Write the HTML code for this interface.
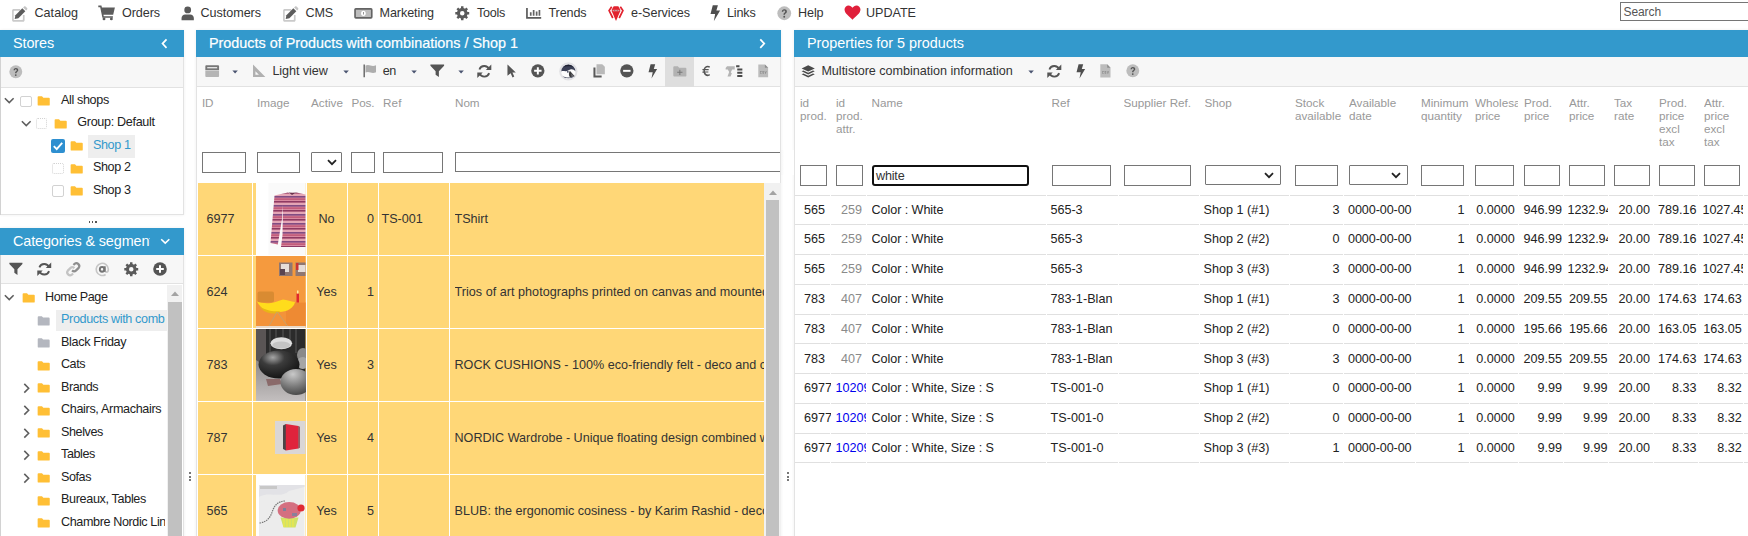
<!DOCTYPE html>
<html><head><meta charset="utf-8"><title>Store Commander</title>
<style>
html,body{margin:0;padding:0;}
body{width:1748px;height:536px;overflow:hidden;background:#fff;position:relative;font-family:"Liberation Sans",sans-serif;}
.t{position:absolute;white-space:nowrap;line-height:1;}
.r{position:absolute;}
.i{position:absolute;overflow:visible;}
.inp{position:absolute;box-sizing:border-box;border:1px solid #767676;background:#fff;border-radius:0;}
.sel{position:absolute;box-sizing:border-box;border:1px solid #767676;background:#fff;border-radius:1px;}
</style></head><body>

<svg class="i" style="left:11px;top:5.5px" width="17" height="16" viewBox="0 0 17 16" ><path d="M2.600 3.100h6.600v1.700H3.200c-.3 0-.5.200-.5.500v8.200c0 .3.200.5.500.5h8.200c.3 0 .5-.2.500-.5V9h1.700v5.300c0 .8-.7 1.500-1.500 1.500H2.600c-.8 0-1.500-.7-1.500-1.500V4.600c0-.8.700-1.500 1.500-1.500z" fill="#cacaca"/><path d="M11.300 2.300l3 3-6.900 6.900-3.700.8.700-3.700z" fill="#5c5c5c"/><path d="M12.100 1.500l1-1c.4-.4 1-.4 1.400 0l1.600 1.600c.4.400.4 1 0 1.400l-1 1z" fill="#c4c4c4"/></svg>
<div class="t " style="left:34.5px;top:7.00px;font-size:12.6px;color:#333;letter-spacing:0.011px;">Catalog</div>
<svg class="i" style="left:98.2px;top:5.2px" width="17.2" height="15.6" viewBox="0 0 18 16" ><path d="M0.300 0.400h3.300l0.500 2.100h13.600l-1.800 7.500H5.700l0.300 1.500h9.600v1.600H4.600L2.300 2.100H0.300z" fill="#5c5c5c"/><circle cx="6.300" cy="14.400" r="1.500" fill="#5c5c5c"/><circle cx="14" cy="14.400" r="1.500" fill="#5c5c5c"/></svg>
<div class="t " style="left:122px;top:7.00px;font-size:12.6px;color:#333;letter-spacing:-0.083px;">Orders</div>
<svg class="i" style="left:180.8px;top:6px" width="13.4" height="14.7" viewBox="0 0 14 16" ><circle cx="7" cy="4.3" r="3.7" fill="#5a5a5a"/><path d="M0.3 15.5v-2.3c0-2.3 1.8-3.9 4-3.9h5.4c2.2 0 4 1.6 4 3.9v2.3z" fill="#5a5a5a"/></svg>
<div class="t " style="left:200.5px;top:7.00px;font-size:12.6px;color:#333;letter-spacing:-0.043px;">Customers</div>
<svg class="i" style="left:282px;top:5.5px" width="17" height="16" viewBox="0 0 17 16" ><path d="M2.600 3.100h6.600v1.700H3.200c-.3 0-.5.200-.5.500v8.200c0 .3.200.5.500.5h8.200c.3 0 .5-.2.500-.5V9h1.700v5.300c0 .8-.7 1.500-1.500 1.500H2.600c-.8 0-1.500-.7-1.500-1.500V4.600c0-.8.700-1.500 1.500-1.500z" fill="#cacaca"/><path d="M11.300 2.300l3 3-6.900 6.900-3.700.8.700-3.700z" fill="#5c5c5c"/><path d="M12.100 1.500l1-1c.4-.4 1-.4 1.400 0l1.600 1.600c.4.400.4 1 0 1.400l-1 1z" fill="#c4c4c4"/></svg>
<div class="t " style="left:305.5px;top:7.00px;font-size:12.6px;color:#333;letter-spacing:-0.167px;">CMS</div>
<svg class="i" style="left:353.8px;top:7.8px" width="18.8" height="10.7" viewBox="0 0 19 11" ><rect x="0.900" y="0.900" width="17.200" height="9.200" rx="0.800" fill="#bdbdbd" stroke="#636363" stroke-width="1.700"/><ellipse cx="9.500" cy="5.500" rx="2.400" ry="2.700" fill="#fff"/><path d="M9.100 4.200h0.900v2.600h-0.900z" fill="#888"/></svg>
<div class="t " style="left:379.5px;top:7.00px;font-size:12.6px;color:#333;letter-spacing:-0.089px;">Marketing</div>
<svg class="i" style="left:455px;top:6px" width="14.5" height="14.5" viewBox="0 0 16 16" ><path fill-rule="evenodd" d="M15.68 6.66 L15.68 9.34 L13.74 9.38 L13.03 11.08 L14.38 12.49 L12.49 14.38 L11.08 13.03 L9.38 13.74 L9.34 15.68 L6.66 15.68 L6.62 13.74 L4.92 13.03 L3.51 14.38 L1.62 12.49 L2.97 11.08 L2.26 9.38 L0.32 9.34 L0.32 6.66 L2.26 6.62 L2.97 4.92 L1.62 3.51 L3.51 1.62 L4.92 2.97 L6.62 2.26 L6.66 0.32 L9.34 0.32 L9.38 2.26 L11.08 2.97 L12.49 1.62 L14.38 3.51 L13.03 4.92 L13.74 6.62Z M5.50 8.00 a2.50 2.50 0 1 0 5.00 0 a2.50 2.50 0 1 0 -5.00 0Z" fill="#5a5a5a"/></svg>
<div class="t " style="left:477px;top:7.00px;font-size:12.6px;color:#333;letter-spacing:-0.281px;">Tools</div>
<svg class="i" style="left:526.3px;top:7.8px" width="15.2" height="10.7" viewBox="0 0 15.200 10.700" ><path d="M0.100 0h1.700v9h13.400v1.700H0.100z" fill="#5a5a5a"/><path d="M3.900 4.300h1.700v3.400H3.900zM6.800 1.900h1.700v5.800H6.800zM9.800 3.600h1.700v4.100H9.800zM12.600 1.900h1.700v5.800h-1.700z" fill="#636363"/></svg>
<div class="t " style="left:548.5px;top:7.00px;font-size:12.6px;color:#333;letter-spacing:-0.122px;">Trends</div>
<svg class="i" style="left:607.5px;top:5.6px" width="16" height="15" viewBox="0 0 16 15" ><path d="M5.700 0.200h4.600l1.900 3.400v1.600L8 14.900 3.800 5.200V3.600z" fill="#e2222e"/><path d="M3.700 0.700L1.100 4.600l3.700 7.400" fill="none" stroke="#e2222e" stroke-width="1.700"/><path d="M12.300 0.700l2.600 3.900-3.700 7.400" fill="none" stroke="#e2222e" stroke-width="1.700"/><path d="M4.600 3.800h6.800v1.500H4.600z" fill="#dd9a9e"/><path d="M6.200 4.200h1v.8h-1zM8.800 4.200h1v.8h-1z" fill="#8a5a60"/></svg>
<div class="t " style="left:631px;top:7.00px;font-size:12.6px;color:#333;letter-spacing:-0.050px;">e-Services</div>
<svg class="i" style="left:709.5px;top:5px" width="10.5" height="16.5" viewBox="0 0 10 16" ><path d="M2.6 0.3h5L6.1 5.4h3.6L3.6 15.8l1.3-7H0.4z" fill="#4e4e4e"/></svg>
<div class="t " style="left:727px;top:7.00px;font-size:12.6px;color:#333;letter-spacing:-0.181px;">Links</div>
<svg class="i" style="left:776.5px;top:6px" width="14.5" height="14.5" viewBox="0 0 16 16" ><circle cx="8" cy="8" r="7.6" fill="#bdbdbd"/><path d="M5.3 6.3c0-1.7 1.2-2.8 2.8-2.8 1.6 0 2.8 1 2.8 2.5 0 1.2-.7 1.8-1.4 2.3-.5.4-.7.7-.7 1.3H7.1c0-1 .4-1.6 1.1-2.1.5-.4.9-.7.9-1.4 0-.6-.4-1-1.1-1-.7 0-1.1.5-1.1 1.200z" fill="#555"/><circle cx="7.95" cy="11.9" r="1.05" fill="#555"/></svg>
<div class="t " style="left:798px;top:7.00px;font-size:12.6px;color:#333;letter-spacing:-0.102px;">Help</div>
<svg class="i" style="left:844px;top:5px" width="17" height="15" viewBox="0 0 18 16" ><path d="M9 15.6C5 12 0.5 8.800 0.5 4.900 0.500 2.300 2.500 0.500 4.800 0.500 6.500 0.500 8.100 1.500 9 3 9.900 1.500 11.500 0.500 13.200 0.500 15.500 0.500 17.500 2.300 17.500 4.900 17.500 8.800 13 12 9 15.600z" fill="#e0203b"/></svg>
<div class="t " style="left:866px;top:7.00px;font-size:12.6px;color:#333;letter-spacing:-0.026px;">UPDATE</div>
<div class="inp" style="left:1620px;top:2px;width:140px;height:19px;"></div>
<div class="t " style="left:1623.5px;top:6.00px;font-size:12px;color:#555;letter-spacing:-0.089px;">Search</div>
<div class="r" style="left:0px;top:30px;width:184px;height:185px;background:#fff;box-sizing:border-box;border:1px solid #e3e3e3;box-shadow:0 0 3px rgba(0,0,0,.07);"></div>
<div class="r" style="left:0px;top:228px;width:184px;height:320px;background:#fff;box-sizing:border-box;border:1px solid #e3e3e3;box-shadow:0 0 3px rgba(0,0,0,.07);"></div>
<div class="r" style="left:196px;top:30px;width:585px;height:520px;background:#fff;box-sizing:border-box;border:1px solid #e3e3e3;box-shadow:0 0 3px rgba(0,0,0,.07);"></div>
<div class="r" style="left:794px;top:30px;width:970px;height:520px;background:#fff;box-sizing:border-box;border:1px solid #e3e3e3;box-shadow:0 0 3px rgba(0,0,0,.07);"></div>
<div class="r" style="left:0px;top:57px;width:1px;height:158px;background:#d2d2d2;"></div>
<div class="r" style="left:0px;top:255px;width:1px;height:281px;background:#d2d2d2;"></div>
<div class="r" style="left:0px;top:30px;width:184px;height:27px;background:#3399cc;"></div>
<div class="t " style="left:13px;top:36.00px;font-size:14.4px;color:#fff;letter-spacing:-0.099px;">Stores</div>
<svg class="i" style="left:161px;top:37.5px" width="6.8" height="11.2" viewBox="0 0 8 12" ><path d="M6.5 1L1.8 6l4.700 5" fill="none" stroke="#fff" stroke-width="2"/></svg>
<div class="r" style="left:196px;top:30px;width:585px;height:27px;background:#3399cc;"></div>
<div class="t " style="left:209px;top:36.00px;font-size:14.4px;color:#fff;-webkit-text-stroke:0.2px #fff;letter-spacing:-0.012px;">Products of Products with combinations / Shop 1</div>
<svg class="i" style="left:758.7px;top:37.5px" width="6.8" height="11.2" viewBox="0 0 8 12" ><path d="M1.500 1L6.200 6l-4.700 5" fill="none" stroke="#fff" stroke-width="2"/></svg>
<div class="r" style="left:794px;top:30px;width:954px;height:27px;background:#3399cc;"></div>
<div class="t " style="left:807px;top:36.00px;font-size:14.4px;color:#fff;letter-spacing:-0.023px;">Properties for 5 products</div>
<div class="r" style="left:1px;top:57px;width:182px;height:31px;background:#f7f7f7;border-bottom:1px solid #e2e2e2;box-sizing:border-box;"></div>
<div class="r" style="left:197px;top:57px;width:583px;height:30px;background:#f7f7f7;border-bottom:1px solid #e2e2e2;box-sizing:border-box;"></div>
<div class="r" style="left:795px;top:57px;width:953px;height:30px;background:#f7f7f7;border-bottom:1px solid #e2e2e2;box-sizing:border-box;"></div>
<svg class="i" style="left:8.7px;top:64.8px" width="13.6" height="13.6" viewBox="0 0 16 16" ><circle cx="8" cy="8" r="7.6" fill="#bdbdbd"/><path d="M5.3 6.3c0-1.7 1.2-2.8 2.8-2.8 1.6 0 2.8 1 2.8 2.5 0 1.2-.7 1.8-1.4 2.3-.5.4-.7.7-.7 1.3H7.1c0-1 .4-1.6 1.1-2.1.5-.4.9-.7.9-1.4 0-.6-.4-1-1.1-1-.7 0-1.1.5-1.1 1.200z" fill="#555"/><circle cx="7.95" cy="11.9" r="1.05" fill="#555"/></svg>
<svg class="i" style="left:204.8px;top:64.5px" width="14.4" height="12.4" viewBox="0 0 15 13" ><path d="M0.3 1.500c0-.7.5-1.200 1.200-1.200h12c.7 0 1.200.5 1.200 1.200v4H0.3z" fill="#777"/><path d="M2.300 2.200h10.400v1.300H2.300z" fill="#eee"/><path d="M0.3 6h14.400v5.500c0 .7-.5 1.200-1.200 1.200h-12c-.7 0-1.200-.5-1.200-1.200z" fill="#b5b5b5"/></svg>
<svg class="i" style="left:232px;top:70.3px" width="6.2" height="3.8" viewBox="0 0 8 5" ><path d="M0.4 0.500h7.200L4 4.600z" fill="#4a5470"/></svg>
<svg class="i" style="left:251.5px;top:64px" width="14" height="13.5" viewBox="0 0 14 14" ><path fill-rule="evenodd" d="M0.800 0.500L13.600 13.500H0.800zM3.300 7.600v3.600h3.600z" fill="#b0b0b0"/></svg>
<div class="t " style="left:272.4px;top:65.00px;font-size:12.6px;color:#333;letter-spacing:-0.062px;">Light view</div>
<svg class="i" style="left:343px;top:70.3px" width="6.2" height="3.8" viewBox="0 0 8 5" ><path d="M0.4 0.500h7.200L4 4.600z" fill="#4a5470"/></svg>
<svg class="i" style="left:362.8px;top:63.8px" width="13.5" height="13.7" viewBox="0 0 14 14" ><path d="M0.500 0.300h1.500v13.400H0.500z" fill="#666"/><path d="M2.600 1.500c2-1 3.500-.6 5.200 0 1.700.6 3.500.8 5.700-.3v7.300c-2.200 1.100-4 .9-5.700.3-1.700-.6-3.200-1-5.200 0z" fill="#adadad"/></svg>
<div class="t " style="left:382.7px;top:65.00px;font-size:12.6px;color:#333;letter-spacing:-0.558px;">en</div>
<svg class="i" style="left:411px;top:70.3px" width="6.2" height="3.8" viewBox="0 0 8 5" ><path d="M0.4 0.500h7.200L4 4.600z" fill="#4a5470"/></svg>
<svg class="i" style="left:430.3px;top:64px" width="14.5" height="13.5" viewBox="0 0 15 14" ><path d="M0.400 0.400h14.200v1.300L9.200 7.400v6.200L5.800 11.200V7.400L0.400 1.700z" fill="#555"/></svg>
<svg class="i" style="left:457.7px;top:70.3px" width="6.2" height="3.8" viewBox="0 0 8 5" ><path d="M0.4 0.500h7.200L4 4.600z" fill="#4a5470"/></svg>
<svg class="i" style="left:477.4px;top:63.8px" width="14.6" height="14.6" viewBox="0 0 15 15" ><path d="M12.400 5.300A5.300 5.300 0 0 0 2.500 5.600" fill="none" stroke="#555" stroke-width="1.900"/><path d="M2.600 9.700A5.300 5.300 0 0 0 12.500 9.400" fill="none" stroke="#555" stroke-width="1.900"/><path d="M14.700 0.600v5.600H9.100zM0.300 14.400V8.800h5.600z" fill="#555"/></svg>
<svg class="i" style="left:506.6px;top:63.9px" width="9.2" height="13.8" viewBox="0 0 10 15" ><path d="M0.500 0.400L9.600 9.300H5.900l2 4.400-1.900.9-2-4.500L0.500 12.800z" fill="#555"/></svg>
<svg class="i" style="left:530.7px;top:63.9px" width="13.7" height="13.7" viewBox="0 0 14 14" ><circle cx="7" cy="7" r="6.800" fill="#555"/><path d="M6 3.200h2V6h2.800v2H8v2.800H6V8H3.200V6H6z" fill="#fff"/></svg>
<svg class="i" style="left:559px;top:62px" width="18.7" height="18.7" viewBox="0 0 19 19" ><circle cx="9.500" cy="9.500" r="9.300" fill="#e2e2e5"/><circle cx="9.500" cy="9.700" r="7.300" fill="#fdfdfd"/><path d="M2.300 9.700A7.200 7.200 0 0 1 16.700 9.700C15.500 7.500 13.500 7 11.500 7.500 9.500 8 9 9.200 7 9.300 5 9.400 3.500 8.800 2.300 9.700z" fill="#3c4056"/><path d="M4 5.500A7 7 0 0 1 15 5.500C12 4 7 4 4 5.500z" fill="#1e2030"/><path d="M11 8.900l5 5.600-4.900 1.100c-1.400-2-1.400-4.600-.1-6.700z" fill="#3a3a3d"/><path d="M12.400 11.500l2.600 2.800-2.400.5z" fill="#6c6c72"/><circle cx="9" cy="10" r="0.900" fill="#3c4056"/><path d="M3.700 14.300C6.500 16.300 12.500 16.300 15.300 14.300 13.500 17.300 5.500 17.300 3.700 14.300z" fill="#3c4056"/></svg>
<svg class="i" style="left:593px;top:63.9px" width="12.3" height="13.8" viewBox="0 0 13 15" ><path d="M3.600 0.300h6.300l2.800 2.800v8.100H3.600z" fill="#b9b9b9"/><path d="M0.300 3.800h2.200v8.700h6.700v2.200H0.300z" fill="#5a5a5a"/></svg>
<svg class="i" style="left:620.4px;top:63.9px" width="13.7" height="13.7" viewBox="0 0 14 14" ><circle cx="7" cy="7" r="6.800" fill="#555"/><path d="M3.200 6h7.600v2H3.200z" fill="#fff"/></svg>
<svg class="i" style="left:648.2px;top:63.5px" width="9.6" height="14.8" viewBox="0 0 10 16" ><path d="M2.6 0.3h5L6.1 5.4h3.6L3.6 15.8l1.3-7H0.4z" fill="#4e4e4e"/></svg>
<div class="r" style="left:665px;top:57px;width:29px;height:29.5px;background:#dedede;"></div>
<svg class="i" style="left:673.3px;top:65.5px" width="13.7" height="10.8" viewBox="0 0 14 11" ><path d="M0.3 1.300c0-.6.4-1 1-1h3.600l1.400 1.500h6.400c.6 0 1 .4 1 1v7c0 .6-.4 1-1 1H1.300c-.6 0-1-.4-1-1z" fill="#b2b2b2"/><path d="M6.500 3.700h1v2.200h2.200v1H7.500v2.200h-1V6.900H4.300v-1h2.200z" fill="#777"/></svg>
<svg class="i" style="left:702px;top:64.5px" width="8.7" height="12" viewBox="0 0 10 13" ><path d="M9.300 1.300C8.500.7 7.600.4 6.600.4 4.300.4 2.500 2 1.900 4.300H0.500v1.300h1.200v1.500H0.500v1.300h1.400c.6 2.400 2.400 4 4.700 4 1 0 1.900-.3 2.700-.9L8.500 10c-.5.400-1.200.6-1.900.6-1.300 0-2.400-.9-2.900-2.300h3.600V7.100H3.400V5.600h4.300V4.300H3.700c.5-1.400 1.600-2.200 2.900-2.200.7 0 1.400.2 1.900.6z" fill="#555"/></svg>
<svg class="i" style="left:725px;top:64.5px" width="18" height="13" viewBox="0 0 19 14" ><path d="M0.500 3.300l1.500-2h8.300v3.500H7.500L6 8.200 7.200 9 5.800 12.500H2.500l1.800-5-1.500-2.700H0.500z" fill="#b4b4b4"/><path d="M11.800 0.400h3.600v2h-3.600zM13 3.800h5.500v2H13zM13 7.300h5.500v2H13zM13 10.800h5.500v2.200H13z" fill="#4a4a4a"/></svg>
<svg class="i" style="left:758px;top:63.9px" width="10.4" height="13.8" viewBox="0 0 11 14" ><path d="M0.300 0.300h7l3.400 3.400v10H0.300z" fill="#bcbcbc"/><path d="M7.300 0.300l3.400 3.400H7.300z" fill="#8e8e8e"/><path d="M2.300 7.200h1.600v.6H2.900v1.600h1v.6H2.300zM4.700 7.200h1.600v.6H5.300v.5h1v1.700H4.700v-.6h1v-.5h-1zM6.900 7.200h.6l.5 1.800.5-1.800h.6L8.300 10h-.6z" fill="#8a8a8a"/></svg>
<svg class="i" style="left:801.2px;top:64.5px" width="14.4" height="13.2" viewBox="0 0 15 14" ><path d="M7.500 0.300l7 3.300-7 3.300-7-3.300z" fill="#4a4a4a"/><path d="M2.400 5.800L7.500 8.200l5.100-2.400 1.900.9-7 3.300-7-3.300z" fill="#4a4a4a"/><path d="M2.400 9l5.100 2.400L12.600 9l1.900.9-7 3.300-7-3.300z" fill="#4a4a4a"/></svg>
<div class="t " style="left:821.4px;top:65.00px;font-size:12.6px;color:#333;letter-spacing:-0.015px;">Multistore combination information</div>
<svg class="i" style="left:1027.9px;top:70.3px" width="6.2" height="3.8" viewBox="0 0 8 5" ><path d="M0.4 0.500h7.200L4 4.600z" fill="#4a5470"/></svg>
<svg class="i" style="left:1046.9px;top:63.8px" width="14.6" height="14.6" viewBox="0 0 15 15" ><path d="M12.400 5.300A5.300 5.300 0 0 0 2.500 5.600" fill="none" stroke="#555" stroke-width="1.900"/><path d="M2.600 9.700A5.300 5.300 0 0 0 12.500 9.400" fill="none" stroke="#555" stroke-width="1.900"/><path d="M14.700 0.600v5.600H9.100zM0.300 14.400V8.800h5.600z" fill="#555"/></svg>
<svg class="i" style="left:1075.9px;top:63.5px" width="9.6" height="14.8" viewBox="0 0 10 16" ><path d="M2.6 0.3h5L6.1 5.4h3.6L3.6 15.8l1.3-7H0.4z" fill="#4e4e4e"/></svg>
<svg class="i" style="left:1099.8px;top:63.9px" width="10.8" height="13.8" viewBox="0 0 11 14" ><path d="M0.300 0.300h7l3.400 3.400v10H0.300z" fill="#bcbcbc"/><path d="M7.300 0.300l3.400 3.400H7.300z" fill="#8e8e8e"/><path d="M2.300 7.200h1.600v.6H2.900v1.600h1v.6H2.300zM4.700 7.200h1.600v.6H5.300v.5h1v1.700H4.700v-.6h1v-.5h-1zM6.900 7.200h.6l.5 1.800.5-1.800h.6L8.300 10h-.6z" fill="#8a8a8a"/></svg>
<svg class="i" style="left:1126px;top:64.3px" width="13.6" height="13.6" viewBox="0 0 16 16" ><circle cx="8" cy="8" r="7.6" fill="#bdbdbd"/><path d="M5.3 6.3c0-1.7 1.2-2.8 2.8-2.8 1.6 0 2.8 1 2.8 2.5 0 1.2-.7 1.8-1.4 2.3-.5.4-.7.7-.7 1.3H7.1c0-1 .4-1.6 1.1-2.1.5-.4.9-.7.9-1.4 0-.6-.4-1-1.1-1-.7 0-1.1.5-1.1 1.200z" fill="#555"/><circle cx="7.95" cy="11.9" r="1.05" fill="#555"/></svg>
<svg class="i" style="left:3.7px;top:97.4px" width="10.5" height="7.3" viewBox="0 0 12 8" ><path d="M1 1.300L6 6.300l5-5" fill="none" stroke="#5e5e5e" stroke-width="1.800"/></svg>
<div class="r" style="left:20.2px;top:95.8px;width:11.5px;height:11.5px;box-sizing:border-box;border:1px solid #d2d2d2;border-radius:2px;background:#fff"></div>
<svg class="i" style="left:36.8px;top:96px" width="13.4" height="9.8" viewBox="0 0 14 11" ><path d="M0.200 1.200c0-.6.400-1 1-1h3.900l1.500 1.700h6.200c.6 0 1 .4 1 1v6.900c0 .6-.4 1-1 1H1.200c-.6 0-1-.4-1-1z" fill="#ffbf35"/></svg>
<div class="t " style="left:60.9px;top:94.00px;font-size:12.6px;color:#222;letter-spacing:-0.345px;">All shops</div>
<svg class="i" style="left:20.8px;top:119.9px" width="10.5" height="7.3" viewBox="0 0 12 8" ><path d="M1 1.300L6 6.300l5-5" fill="none" stroke="#5e5e5e" stroke-width="1.800"/></svg>
<div class="r" style="left:35.8px;top:117.5px;width:11.5px;height:11.5px;box-sizing:border-box;border:1px dotted #d2d2d2;border-radius:2px;background:#fff"></div>
<svg class="i" style="left:53.8px;top:118.5px" width="13.4" height="9.8" viewBox="0 0 14 11" ><path d="M0.200 1.200c0-.6.400-1 1-1h3.900l1.500 1.700h6.200c.6 0 1 .4 1 1v6.900c0 .6-.4 1-1 1H1.200c-.6 0-1-.4-1-1z" fill="#ffbf35"/></svg>
<div class="t " style="left:77.3px;top:116.00px;font-size:12.6px;color:#222;letter-spacing:-0.322px;">Group: Default</div>
<div class="r" style="left:88px;top:134.5px;width:47px;height:23px;background:#eeeeee;"></div>
<svg class="i" style="left:51px;top:139px" width="14" height="14" viewBox="0 0 14 14"><rect x="0" y="0" width="14" height="14" rx="2" fill="#2e8fd0"/><path d="M2.800 7.200l2.900 2.900 5.500-6.200" fill="none" stroke="#fff" stroke-width="1.900"/></svg>
<svg class="i" style="left:70px;top:141px" width="13.4" height="9.8" viewBox="0 0 14 11" ><path d="M0.200 1.200c0-.6.400-1 1-1h3.900l1.500 1.700h6.200c.6 0 1 .4 1 1v6.900c0 .6-.4 1-1 1H1.200c-.6 0-1-.4-1-1z" fill="#ffbf35"/></svg>
<div class="t " style="left:93px;top:139.00px;font-size:12.6px;color:#3399cc;letter-spacing:-0.404px;">Shop 1</div>
<div class="r" style="left:52px;top:162.8px;width:11.5px;height:11.5px;box-sizing:border-box;border:1px dotted #d2d2d2;border-radius:2px;background:#fff"></div>
<svg class="i" style="left:70px;top:163.5px" width="13.4" height="9.8" viewBox="0 0 14 11" ><path d="M0.200 1.200c0-.6.400-1 1-1h3.900l1.500 1.700h6.200c.6 0 1 .4 1 1v6.900c0 .6-.4 1-1 1H1.200c-.6 0-1-.4-1-1z" fill="#ffbf35"/></svg>
<div class="t " style="left:93px;top:161.00px;font-size:12.6px;color:#222;letter-spacing:-0.404px;">Shop 2</div>
<div class="r" style="left:52px;top:185.3px;width:11.5px;height:11.5px;box-sizing:border-box;border:1px solid #d2d2d2;border-radius:2px;background:#fff"></div>
<svg class="i" style="left:70px;top:186px" width="13.4" height="9.8" viewBox="0 0 14 11" ><path d="M0.200 1.200c0-.6.400-1 1-1h3.900l1.500 1.700h6.200c.6 0 1 .4 1 1v6.900c0 .6-.4 1-1 1H1.200c-.6 0-1-.4-1-1z" fill="#ffbf35"/></svg>
<div class="t " style="left:93px;top:184.00px;font-size:12.6px;color:#222;letter-spacing:-0.404px;">Shop 3</div>
<div class="r" style="left:88.5px;top:221.3px;width:1.7px;height:1.7px;background:#555;"></div>
<div class="r" style="left:91.7px;top:221.3px;width:1.7px;height:1.7px;background:#555;"></div>
<div class="r" style="left:94.9px;top:221.3px;width:1.7px;height:1.7px;background:#555;"></div>
<div class="r" style="left:0px;top:228px;width:184px;height:27px;background:#3399cc;"></div>
<div class="t " style="left:13px;top:234.00px;font-size:14.4px;color:#fff;width:136.5px;overflow:hidden;padding-bottom:4px;letter-spacing:-0.110px;">Categories &amp; segments</div>
<svg class="i" style="left:160px;top:237.5px" width="10.5" height="6.5" viewBox="0 0 12 8" ><path d="M1 1.500L6 6.200l5-4.700" fill="none" stroke="#fff" stroke-width="2"/></svg>
<div class="r" style="left:1px;top:255px;width:182px;height:29px;background:#f7f7f7;border-bottom:1px solid #e2e2e2;box-sizing:border-box;"></div>
<svg class="i" style="left:8.8px;top:262px" width="13.8" height="13.7" viewBox="0 0 15 14" ><path d="M0.400 0.400h14.200v1.300L9.200 7.400v6.200L5.800 11.200V7.400L0.400 1.700z" fill="#555"/></svg>
<svg class="i" style="left:37px;top:262px" width="14.5" height="14.5" viewBox="0 0 15 15" ><path d="M12.400 5.300A5.300 5.300 0 0 0 2.500 5.600" fill="none" stroke="#555" stroke-width="1.900"/><path d="M2.600 9.700A5.300 5.300 0 0 0 12.500 9.400" fill="none" stroke="#555" stroke-width="1.900"/><path d="M14.700 0.600v5.600H9.100zM0.300 14.400V8.800h5.600z" fill="#555"/></svg>
<svg class="i" style="left:66px;top:262px" width="14.5" height="14.5" viewBox="0 0 15 15" ><path d="M8.700 6.300a3 3 0 0 0-4.200 0L1.900 8.900a3 3 0 0 0 4.200 4.200l1.200-1.200" fill="none" stroke="#c4c4c4" stroke-width="2.300"/><path d="M6.300 8.700a3 3 0 0 0 4.200 0l2.600-2.600a3 3 0 0 0-4.200-4.200L7.700 3.100" fill="none" stroke="#8e8e8e" stroke-width="2.300"/></svg>
<svg class="i" style="left:95px;top:262px" width="14.5" height="14.5" viewBox="0 0 15 15" ><path d="M10.300 4.600v4.200c0 1.100 .7 1.700 1.500 1.700 1.200 0 2-1.200 2-3A6.300 6.300 0 1 0 11 12.900" fill="none" stroke="#c6c6c6" stroke-width="1.700"/><ellipse cx="7.300" cy="7.600" rx="2.300" ry="2.500" fill="none" stroke="#757575" stroke-width="2"/><path d="M10 4.500v5.600" fill="none" stroke="#757575" stroke-width="2"/></svg>
<svg class="i" style="left:124px;top:262px" width="14.5" height="14.5" viewBox="0 0 16 16" ><path fill-rule="evenodd" d="M15.68 6.66 L15.68 9.34 L13.74 9.38 L13.03 11.08 L14.38 12.49 L12.49 14.38 L11.08 13.03 L9.38 13.74 L9.34 15.68 L6.66 15.68 L6.62 13.74 L4.92 13.03 L3.51 14.38 L1.62 12.49 L2.97 11.08 L2.26 9.38 L0.32 9.34 L0.32 6.66 L2.26 6.62 L2.97 4.92 L1.62 3.51 L3.51 1.62 L4.92 2.97 L6.62 2.26 L6.66 0.32 L9.34 0.32 L9.38 2.26 L11.08 2.97 L12.49 1.62 L14.38 3.51 L13.03 4.92 L13.74 6.62Z M5.50 8.00 a2.50 2.50 0 1 0 5.00 0 a2.50 2.50 0 1 0 -5.00 0Z" fill="#5a5a5a"/></svg>
<svg class="i" style="left:153px;top:262.3px" width="14" height="14" viewBox="0 0 14 14" ><circle cx="7" cy="7" r="6.800" fill="#555"/><path d="M6 3.200h2V6h2.800v2H8v2.800H6V8H3.200V6H6z" fill="#fff"/></svg>
<svg class="i" style="left:3.7px;top:294.4px" width="10.5" height="7.3" viewBox="0 0 12 8" ><path d="M1 1.300L6 6.300l5-5" fill="none" stroke="#5e5e5e" stroke-width="1.800"/></svg>
<svg class="i" style="left:22px;top:293px" width="13.4" height="9.8" viewBox="0 0 14 11" ><path d="M0.200 1.200c0-.6.400-1 1-1h3.900l1.500 1.700h6.200c.6 0 1 .4 1 1v6.900c0 .6-.4 1-1 1H1.200c-.6 0-1-.4-1-1z" fill="#ffbf35"/></svg>
<div class="t " style="left:45px;top:291.00px;font-size:12.6px;color:#222;letter-spacing:-0.446px;">Home Page</div>
<div class="r" style="left:56px;top:309.5px;width:111px;height:21.5px;background:#eeeeee;"></div>
<svg class="i" style="left:37px;top:315.5px" width="13.4" height="9.8" viewBox="0 0 14 11" ><path d="M0.3 1.300c0-.6.4-1 1-1h3.600l1.400 1.500h6.400c.6 0 1 .4 1 1v7c0 .6-.4 1-1 1H1.300c-.6 0-1-.4-1-1z" fill="#b4b7bf"/></svg>
<div class="t " style="left:61px;top:313.00px;font-size:12.6px;color:#3399cc;width:104.3px;overflow:hidden;padding-bottom:4px;letter-spacing:-0.355px;">Products with combinations</div>
<svg class="i" style="left:37px;top:338px" width="13.4" height="9.8" viewBox="0 0 14 11" ><path d="M0.3 1.300c0-.6.4-1 1-1h3.600l1.400 1.500h6.400c.6 0 1 .4 1 1v7c0 .6-.4 1-1 1H1.300c-.6 0-1-.4-1-1z" fill="#b4b7bf"/></svg>
<div class="t " style="left:61px;top:336.00px;font-size:12.6px;color:#222;width:104.3px;overflow:hidden;padding-bottom:4px;letter-spacing:-0.337px;">Black Friday</div>
<svg class="i" style="left:37px;top:360.5px" width="13.4" height="9.8" viewBox="0 0 14 11" ><path d="M0.200 1.200c0-.6.400-1 1-1h3.900l1.500 1.700h6.200c.6 0 1 .4 1 1v6.900c0 .6-.4 1-1 1H1.200c-.6 0-1-.4-1-1z" fill="#ffbf35"/></svg>
<div class="t " style="left:61px;top:358.00px;font-size:12.6px;color:#222;width:104.3px;overflow:hidden;padding-bottom:4px;letter-spacing:-0.477px;">Cats</div>
<svg class="i" style="left:22.5px;top:382.8px" width="7.3" height="10.5" viewBox="0 0 8 12" ><path d="M1.300 1L6.300 6l-5 5" fill="none" stroke="#5e5e5e" stroke-width="1.800"/></svg>
<svg class="i" style="left:37px;top:383px" width="13.4" height="9.8" viewBox="0 0 14 11" ><path d="M0.200 1.200c0-.6.400-1 1-1h3.900l1.500 1.700h6.200c.6 0 1 .4 1 1v6.900c0 .6-.4 1-1 1H1.200c-.6 0-1-.4-1-1z" fill="#ffbf35"/></svg>
<div class="t " style="left:61px;top:381.00px;font-size:12.6px;color:#222;width:104.3px;overflow:hidden;padding-bottom:4px;letter-spacing:-0.484px;">Brands</div>
<svg class="i" style="left:22.5px;top:405.3px" width="7.3" height="10.5" viewBox="0 0 8 12" ><path d="M1.300 1L6.300 6l-5 5" fill="none" stroke="#5e5e5e" stroke-width="1.800"/></svg>
<svg class="i" style="left:37px;top:405.5px" width="13.4" height="9.8" viewBox="0 0 14 11" ><path d="M0.200 1.200c0-.6.400-1 1-1h3.900l1.500 1.700h6.200c.6 0 1 .4 1 1v6.900c0 .6-.4 1-1 1H1.200c-.6 0-1-.4-1-1z" fill="#ffbf35"/></svg>
<div class="t " style="left:61px;top:403.00px;font-size:12.6px;color:#222;width:104.3px;overflow:hidden;padding-bottom:4px;letter-spacing:-0.341px;">Chairs, Armachairs</div>
<svg class="i" style="left:22.5px;top:427.8px" width="7.3" height="10.5" viewBox="0 0 8 12" ><path d="M1.300 1L6.300 6l-5 5" fill="none" stroke="#5e5e5e" stroke-width="1.800"/></svg>
<svg class="i" style="left:37px;top:428px" width="13.4" height="9.8" viewBox="0 0 14 11" ><path d="M0.200 1.200c0-.6.400-1 1-1h3.900l1.500 1.700h6.200c.6 0 1 .4 1 1v6.900c0 .6-.4 1-1 1H1.200c-.6 0-1-.4-1-1z" fill="#ffbf35"/></svg>
<div class="t " style="left:61px;top:426.00px;font-size:12.6px;color:#222;width:104.3px;overflow:hidden;padding-bottom:4px;letter-spacing:-0.402px;">Shelves</div>
<svg class="i" style="left:22.5px;top:450.3px" width="7.3" height="10.5" viewBox="0 0 8 12" ><path d="M1.300 1L6.300 6l-5 5" fill="none" stroke="#5e5e5e" stroke-width="1.800"/></svg>
<svg class="i" style="left:37px;top:450.5px" width="13.4" height="9.8" viewBox="0 0 14 11" ><path d="M0.200 1.200c0-.6.400-1 1-1h3.900l1.500 1.700h6.200c.6 0 1 .4 1 1v6.900c0 .6-.4 1-1 1H1.200c-.6 0-1-.4-1-1z" fill="#ffbf35"/></svg>
<div class="t " style="left:61px;top:448.00px;font-size:12.6px;color:#222;width:104.3px;overflow:hidden;padding-bottom:4px;letter-spacing:-0.401px;">Tables</div>
<svg class="i" style="left:22.5px;top:472.8px" width="7.3" height="10.5" viewBox="0 0 8 12" ><path d="M1.300 1L6.300 6l-5 5" fill="none" stroke="#5e5e5e" stroke-width="1.800"/></svg>
<svg class="i" style="left:37px;top:473px" width="13.4" height="9.8" viewBox="0 0 14 11" ><path d="M0.200 1.200c0-.6.400-1 1-1h3.900l1.500 1.700h6.200c.6 0 1 .4 1 1v6.900c0 .6-.4 1-1 1H1.200c-.6 0-1-.4-1-1z" fill="#ffbf35"/></svg>
<div class="t " style="left:61px;top:471.00px;font-size:12.6px;color:#222;width:104.3px;overflow:hidden;padding-bottom:4px;letter-spacing:-0.444px;">Sofas</div>
<svg class="i" style="left:37px;top:495.5px" width="13.4" height="9.8" viewBox="0 0 14 11" ><path d="M0.200 1.200c0-.6.400-1 1-1h3.900l1.500 1.700h6.200c.6 0 1 .4 1 1v6.900c0 .6-.4 1-1 1H1.200c-.6 0-1-.4-1-1z" fill="#ffbf35"/></svg>
<div class="t " style="left:61px;top:493.00px;font-size:12.6px;color:#222;width:104.3px;overflow:hidden;padding-bottom:4px;letter-spacing:-0.340px;">Bureaux, Tables</div>
<svg class="i" style="left:37px;top:518px" width="13.4" height="9.8" viewBox="0 0 14 11" ><path d="M0.200 1.200c0-.6.400-1 1-1h3.900l1.500 1.700h6.200c.6 0 1 .4 1 1v6.900c0 .6-.4 1-1 1H1.200c-.6 0-1-.4-1-1z" fill="#ffbf35"/></svg>
<div class="t " style="left:61px;top:516.00px;font-size:12.6px;color:#222;width:104.3px;overflow:hidden;padding-bottom:4px;letter-spacing:-0.389px;">Chambre Nordic Line</div>
<div class="r" style="left:166.5px;top:285px;width:15.5px;height:251px;background:#f1f1f1;"></div>
<svg class="i" style="left:170.5px;top:291px" width="8" height="5" viewBox="0 0 8 5"><path d="M0 5L4 0.500 8 5z" fill="#a3a3a3"/></svg>
<div class="r" style="left:168px;top:302px;width:13.5px;height:234px;background:#c1c1c1;"></div>
<div class="r" style="left:189px;top:472.2px;width:2px;height:1.8px;background:#777;"></div>
<div class="r" style="left:787px;top:472.2px;width:2px;height:1.8px;background:#777;"></div>
<div class="r" style="left:189px;top:475.8px;width:2px;height:1.8px;background:#777;"></div>
<div class="r" style="left:787px;top:475.8px;width:2px;height:1.8px;background:#777;"></div>
<div class="r" style="left:189px;top:479.4px;width:2px;height:1.8px;background:#777;"></div>
<div class="r" style="left:787px;top:479.4px;width:2px;height:1.8px;background:#777;"></div>
<div class="t " style="left:202px;top:97.00px;font-size:11.7px;color:#999;letter-spacing:-0.344px;">ID</div>
<div class="t " style="left:257px;top:97.00px;font-size:11.7px;color:#999;letter-spacing:0.003px;">Image</div>
<div class="t " style="left:311px;top:97.00px;font-size:11.7px;color:#999;letter-spacing:0.029px;">Active</div>
<div class="t " style="left:351.5px;top:97.00px;font-size:11.7px;color:#999;letter-spacing:-0.098px;">Pos.</div>
<div class="t " style="left:383px;top:97.00px;font-size:11.7px;color:#999;letter-spacing:0.099px;">Ref</div>
<div class="t " style="left:455px;top:97.00px;font-size:11.7px;color:#999;letter-spacing:-0.062px;">Nom</div>
<div class="inp" style="left:202px;top:152px;width:44px;height:21px"></div>
<div class="inp" style="left:257px;top:152px;width:43px;height:21px"></div>
<div class="inp" style="left:351px;top:152px;width:24px;height:21px"></div>
<div class="inp" style="left:383px;top:152px;width:60px;height:21px"></div>
<div class="inp" style="left:455px;top:152px;width:330px;height:20px;border-right:none"></div>
<div class="r" style="left:780px;top:150px;width:1px;height:25px;background:#e3e3e3;"></div>
<div class="r" style="left:781px;top:150px;width:13px;height:25px;background:#fff;background:linear-gradient(90deg,#f4f4f4,#fff 3px)"></div>
<div class="sel" style="left:311px;top:152px;width:31px;height:20px"></div>
<svg class="i" style="left:327px;top:158.5px" width="10" height="7" viewBox="0 0 10 7"><path d="M1 1.200l4 4 4-4" fill="none" stroke="#222" stroke-width="1.800"/></svg>
<div class="r" style="left:198px;top:183px;width:53.5px;height:72px;background:#ffd777;"></div>
<div class="r" style="left:252.5px;top:183px;width:53px;height:72px;background:#ffd777;"></div>
<div class="r" style="left:306.5px;top:183px;width:40px;height:72px;background:#ffd777;"></div>
<div class="r" style="left:347.5px;top:183px;width:30px;height:72px;background:#ffd777;"></div>
<div class="r" style="left:378.5px;top:183px;width:70px;height:72px;background:#ffd777;"></div>
<div class="r" style="left:449.5px;top:183px;width:315px;height:72px;background:#ffd777;"></div>
<div class="t " style="left:206.5px;top:213.00px;font-size:12.6px;color:#333;">6977</div>
<div class="t " style="left:306.5px;top:213.00px;font-size:12.6px;color:#333;width:40px;overflow:hidden;padding-bottom:4px;text-align:center;">No</div>
<div class="t " style="left:347.5px;top:213.00px;font-size:12.6px;color:#333;width:26.5px;overflow:hidden;padding-bottom:4px;text-align:right;">0</div>
<div class="t " style="left:381.5px;top:213.00px;font-size:12.6px;color:#333;">TS-001</div>
<div class="t " style="left:454.5px;top:213.00px;font-size:12.6px;color:#333;width:309.7px;overflow:hidden;padding-bottom:4px;letter-spacing:-0.016px;">TShirt</div>
<div class="r" style="left:198px;top:256px;width:53.5px;height:72px;background:#ffd777;"></div>
<div class="r" style="left:252.5px;top:256px;width:53px;height:72px;background:#ffd777;"></div>
<div class="r" style="left:306.5px;top:256px;width:40px;height:72px;background:#ffd777;"></div>
<div class="r" style="left:347.5px;top:256px;width:30px;height:72px;background:#ffd777;"></div>
<div class="r" style="left:378.5px;top:256px;width:70px;height:72px;background:#ffd777;"></div>
<div class="r" style="left:449.5px;top:256px;width:315px;height:72px;background:#ffd777;"></div>
<div class="t " style="left:206.5px;top:286.00px;font-size:12.6px;color:#333;">624</div>
<div class="t " style="left:306.5px;top:286.00px;font-size:12.6px;color:#333;width:40px;overflow:hidden;padding-bottom:4px;text-align:center;">Yes</div>
<div class="t " style="left:347.5px;top:286.00px;font-size:12.6px;color:#333;width:26.5px;overflow:hidden;padding-bottom:4px;text-align:right;">1</div>
<div class="t " style="left:381.5px;top:286.00px;font-size:12.6px;color:#333;"></div>
<div class="t " style="left:454.5px;top:286.00px;font-size:12.6px;color:#333;width:309.7px;overflow:hidden;padding-bottom:4px;letter-spacing:0.025px;">Trios of art photographs printed on canvas and mounted</div>
<div class="r" style="left:198px;top:329px;width:53.5px;height:72px;background:#ffd777;"></div>
<div class="r" style="left:252.5px;top:329px;width:53px;height:72px;background:#ffd777;"></div>
<div class="r" style="left:306.5px;top:329px;width:40px;height:72px;background:#ffd777;"></div>
<div class="r" style="left:347.5px;top:329px;width:30px;height:72px;background:#ffd777;"></div>
<div class="r" style="left:378.5px;top:329px;width:70px;height:72px;background:#ffd777;"></div>
<div class="r" style="left:449.5px;top:329px;width:315px;height:72px;background:#ffd777;"></div>
<div class="t " style="left:206.5px;top:359.00px;font-size:12.6px;color:#333;">783</div>
<div class="t " style="left:306.5px;top:359.00px;font-size:12.6px;color:#333;width:40px;overflow:hidden;padding-bottom:4px;text-align:center;">Yes</div>
<div class="t " style="left:347.5px;top:359.00px;font-size:12.6px;color:#333;width:26.5px;overflow:hidden;padding-bottom:4px;text-align:right;">3</div>
<div class="t " style="left:381.5px;top:359.00px;font-size:12.6px;color:#333;"></div>
<div class="t " style="left:454.5px;top:359.00px;font-size:12.6px;color:#333;width:309.7px;overflow:hidden;padding-bottom:4px;letter-spacing:0.001px;">ROCK CUSHIONS - 100% eco-friendly felt - deco and confort</div>
<div class="r" style="left:198px;top:402px;width:53.5px;height:72px;background:#ffd777;"></div>
<div class="r" style="left:252.5px;top:402px;width:53px;height:72px;background:#ffd777;"></div>
<div class="r" style="left:306.5px;top:402px;width:40px;height:72px;background:#ffd777;"></div>
<div class="r" style="left:347.5px;top:402px;width:30px;height:72px;background:#ffd777;"></div>
<div class="r" style="left:378.5px;top:402px;width:70px;height:72px;background:#ffd777;"></div>
<div class="r" style="left:449.5px;top:402px;width:315px;height:72px;background:#ffd777;"></div>
<div class="t " style="left:206.5px;top:432.00px;font-size:12.6px;color:#333;">787</div>
<div class="t " style="left:306.5px;top:432.00px;font-size:12.6px;color:#333;width:40px;overflow:hidden;padding-bottom:4px;text-align:center;">Yes</div>
<div class="t " style="left:347.5px;top:432.00px;font-size:12.6px;color:#333;width:26.5px;overflow:hidden;padding-bottom:4px;text-align:right;">4</div>
<div class="t " style="left:381.5px;top:432.00px;font-size:12.6px;color:#333;"></div>
<div class="t " style="left:454.5px;top:432.00px;font-size:12.6px;color:#333;width:309.7px;overflow:hidden;padding-bottom:4px;letter-spacing:-0.005px;">NORDIC Wardrobe - Unique floating design combined with</div>
<div class="r" style="left:198px;top:475px;width:53.5px;height:72px;background:#ffd777;"></div>
<div class="r" style="left:252.5px;top:475px;width:53px;height:72px;background:#ffd777;"></div>
<div class="r" style="left:306.5px;top:475px;width:40px;height:72px;background:#ffd777;"></div>
<div class="r" style="left:347.5px;top:475px;width:30px;height:72px;background:#ffd777;"></div>
<div class="r" style="left:378.5px;top:475px;width:70px;height:72px;background:#ffd777;"></div>
<div class="r" style="left:449.5px;top:475px;width:315px;height:72px;background:#ffd777;"></div>
<div class="t " style="left:206.5px;top:505.00px;font-size:12.6px;color:#333;">565</div>
<div class="t " style="left:306.5px;top:505.00px;font-size:12.6px;color:#333;width:40px;overflow:hidden;padding-bottom:4px;text-align:center;">Yes</div>
<div class="t " style="left:347.5px;top:505.00px;font-size:12.6px;color:#333;width:26.5px;overflow:hidden;padding-bottom:4px;text-align:right;">5</div>
<div class="t " style="left:381.5px;top:505.00px;font-size:12.6px;color:#333;"></div>
<div class="t " style="left:454.5px;top:505.00px;font-size:12.6px;color:#333;width:309.7px;overflow:hidden;padding-bottom:4px;letter-spacing:0.003px;">BLUB: the ergonomic cosiness - by Karim Rashid - decorative</div>
<div class="r" style="left:764.2px;top:183px;width:16.8px;height:353px;background:#f1f1f1;"></div>
<svg class="i" style="left:768.5px;top:189.500px" width="8" height="5" viewBox="0 0 8 5"><path d="M0 5L4 0.500 8 5z" fill="#a3a3a3"/></svg>
<div class="r" style="left:766px;top:200px;width:13px;height:336px;background:#c1c1c1;"></div>
<svg class="i" style="overflow:hidden;left:256px;top:183px" width="49.500" height="72" viewBox="0 0 49.500 72">
<defs><pattern id="st" width="10" height="9" patternUnits="userSpaceOnUse"><rect width="10" height="9" fill="#d98aa0"/><rect y="0" width="10" height="1.500" fill="#8e3a63"/><rect y="2.500" width="10" height="1" fill="#f0c0cb"/><rect y="4.200" width="10" height="1.300" fill="#6b3d7c"/><rect y="6.500" width="10" height="1.200" fill="#b94a6c"/></pattern></defs>
<rect width="49.500" height="72" fill="#fff"/><rect x="12.500" width="37" height="72" fill="#fafafa"/>
<path d="M18.500 12.500l6.500-1.500 2 .3L26 36 21.800 61.500l-7.300-1.500z" fill="url(#st)"/>
<path d="M25 11l7-1.500 4 2.500 4.500-2.500 9 2V64H25l1.500-12 .3-22z" fill="url(#st)"/>
<path d="M32.500 9.500l3.500 2.500 4.500-2.500-4 .2z" fill="#6d2f4a"/>
</svg>
<svg class="i" style="overflow:hidden;left:256px;top:256px" width="49.500" height="72" viewBox="0 0 49.500 72">
<rect width="49.500" height="72" fill="#f59a3e"/>
<rect y="46" width="49.500" height="24.500" fill="#f3933a"/>
<rect x="30" y="47" width="19.500" height="23" fill="#ee8a33"/>
<rect x="23" y="6.500" width="13.500" height="13.500" fill="#8f7772"/><rect x="25" y="8" width="8" height="8" fill="#e6ddd8"/><rect x="24" y="13" width="5" height="6" fill="#5a4450"/>
<rect x="39.500" y="6.500" width="10" height="13.500" fill="#8f7772"/><rect x="42" y="9" width="7.500" height="7" fill="#e6ddd8"/><rect x="40" y="7" width="2.500" height="7" fill="#c33"/>
<rect x="1.500" y="35.500" width="16.500" height="11" rx="2" fill="#d98b32"/>
<path d="M1 45.500c3 1.500 9 2 14 1.500 5-.5 9-3 12-3.500 4 0 8 2.500 12 2.500-1 6-8 10-16 10-9 1-18-2-22-10.500z" fill="#ffdc1c"/>
<path d="M3 50c5 4 14 6 21 5l-2 2.500c-7 .5-15-1-19-7.500z" fill="#e9b616"/>
<path d="M21 56l-8 14M21.500 56l10 14" stroke="#c9a06a" stroke-width="1" fill="none"/>
<rect x="40.500" y="37.500" width="2.500" height="9" fill="#e0262d"/><rect x="41" y="34.500" width="1.500" height="3" fill="#ffe9a0"/>
<rect y="70" width="49.500" height="2" fill="#e9d9c9"/>
</svg>
<svg class="i" style="overflow:hidden;left:256px;top:329px" width="49.500" height="72" viewBox="0 0 49.500 72">
<defs><radialGradient id="g1" cx="35%" cy="25%" r="75%"><stop offset="0" stop-color="#a5a5a5"/><stop offset=".38" stop-color="#3c3c3c"/><stop offset="1" stop-color="#151515"/></radialGradient>
<radialGradient id="g2" cx="40%" cy="20%" r="80%"><stop offset="0" stop-color="#c9c9c9"/><stop offset=".6" stop-color="#7a7a7a"/><stop offset="1" stop-color="#4a4a4a"/></radialGradient>
<linearGradient id="g3" x1="0" y1="0" x2="0" y2="1"><stop offset="0" stop-color="#8e8a8a"/><stop offset="1" stop-color="#c3bfbf"/></linearGradient></defs>
<rect width="49.500" height="72" fill="#2b2b2b"/>
<rect width="10" height="40" fill="#5a5555"/>
<path d="M14 0v25M20 0v20M27 0v14M34 0v18M40 0v24" stroke="#4a4a4a" stroke-width="1.500"/>
<path d="M0 31l12 8 20 8 17.500 2V72H0z" fill="url(#g3)"/>
<ellipse cx="47" cy="26" rx="6" ry="7" fill="#8a8a8a"/>
<ellipse cx="46.500" cy="34" rx="5.500" ry="6" fill="#a5a5a5"/>
<path d="M10 50h14l2 5-14 2z" fill="#8a6a6a"/>
<ellipse cx="23" cy="35.500" rx="20.500" ry="14" fill="url(#g1)"/>
<ellipse cx="25.300" cy="14.200" rx="10.800" ry="6" fill="#dedede"/>
<ellipse cx="25.300" cy="16" rx="9" ry="3.500" fill="#c4c4c4"/>
<ellipse cx="40" cy="53" rx="15.500" ry="13" fill="url(#g2)"/>
</svg>
<svg class="i" style="overflow:hidden;left:275px;top:421px" width="30.500" height="33" viewBox="0 0 30.500 33">
<rect width="30.500" height="33" fill="#dad6d6"/>
<path d="M8 4.500l3-1.500v26.500l-3-1.500z" fill="#4a4448"/>
<path d="M10.800 3l12.700 2v22.500L10.800 29.500z" fill="#e0233c"/>
<path d="M23.500 5l1.200.8v21l-1.200.7z" fill="#6a3038"/>
</svg>
<svg class="i" style="overflow:hidden;left:256px;top:475px" width="49.500" height="61" viewBox="0 0 49.500 61">
<rect width="49.500" height="61" fill="#fff"/>
<rect x="3" y="10" width="45.500" height="51" fill="#ececec"/>
<path d="M3 22c10-6 22 2 30-6l15.500-4V10H3z" fill="#e2e2e6"/>
<rect x="4" y="11" width="17" height="3" fill="#c8c8c8"/>
<path d="M3.500 48c8-1 11-6 13-12s6-10 13-10" fill="none" stroke="#777" stroke-width="1.200" stroke-dasharray="1.500 .8"/>
<path d="M24.500 42.500h18l-3 10h-12z" fill="#d0e268"/>
<path d="M28 44v8M31 44v8M34 44v8M37 44v8" stroke="#f0e84a" stroke-width="1.200"/>
<ellipse cx="33.200" cy="35.400" rx="11.500" ry="8.300" fill="#d46f80"/>
<circle cx="45" cy="33" r="3.600" fill="#e02a34"/>
<rect x="27" y="33" width="3" height="3" fill="#7d7f9a"/><rect x="36" y="38" width="5" height="3" fill="#8a7f9a"/>
</svg>

<div class="t " style="left:800px;top:97.00px;font-size:11.7px;color:#999;width:30px;overflow:hidden;padding-bottom:4px;line-height:13px;top:96.35px;">id<br>prod.</div>
<div class="t " style="left:836px;top:97.00px;font-size:11.7px;color:#999;width:30px;overflow:hidden;padding-bottom:4px;line-height:13px;top:96.35px;">id<br>prod.<br>attr.</div>
<div class="t " style="left:871.5px;top:97.00px;font-size:11.7px;color:#999;width:174px;overflow:hidden;padding-bottom:4px;line-height:13px;top:96.35px;">Name</div>
<div class="t " style="left:1051.5px;top:97.00px;font-size:11.7px;color:#999;width:66px;overflow:hidden;padding-bottom:4px;line-height:13px;top:96.35px;">Ref</div>
<div class="t " style="left:1123.5px;top:97.00px;font-size:11.7px;color:#999;width:75px;overflow:hidden;padding-bottom:4px;line-height:13px;top:96.35px;">Supplier Ref.</div>
<div class="t " style="left:1204.5px;top:97.00px;font-size:11.7px;color:#999;width:84px;overflow:hidden;padding-bottom:4px;line-height:13px;top:96.35px;">Shop</div>
<div class="t " style="left:1295px;top:97.00px;font-size:11.7px;color:#999;width:48px;overflow:hidden;padding-bottom:4px;line-height:13px;top:96.35px;">Stock<br>available</div>
<div class="t " style="left:1349px;top:97.00px;font-size:11.7px;color:#999;width:66px;overflow:hidden;padding-bottom:4px;line-height:13px;top:96.35px;">Available<br>date</div>
<div class="t " style="left:1421px;top:97.00px;font-size:11.7px;color:#999;width:48px;overflow:hidden;padding-bottom:4px;line-height:13px;top:96.35px;">Minimum<br>quantity</div>
<div class="t " style="left:1475px;top:97.00px;font-size:11.7px;color:#999;width:43px;overflow:hidden;padding-bottom:4px;line-height:13px;top:96.35px;">Wholesale<br>price</div>
<div class="t " style="left:1524px;top:97.00px;font-size:11.7px;color:#999;width:39px;overflow:hidden;padding-bottom:4px;line-height:13px;top:96.35px;">Prod.<br>price</div>
<div class="t " style="left:1569px;top:97.00px;font-size:11.7px;color:#999;width:39px;overflow:hidden;padding-bottom:4px;line-height:13px;top:96.35px;">Attr.<br>price</div>
<div class="t " style="left:1614px;top:97.00px;font-size:11.7px;color:#999;width:39px;overflow:hidden;padding-bottom:4px;line-height:13px;top:96.35px;">Tax<br>rate</div>
<div class="t " style="left:1659px;top:97.00px;font-size:11.7px;color:#999;width:39px;overflow:hidden;padding-bottom:4px;line-height:13px;top:96.35px;">Prod.<br>price<br>excl<br>tax</div>
<div class="t " style="left:1704px;top:97.00px;font-size:11.7px;color:#999;width:39px;overflow:hidden;padding-bottom:4px;line-height:13px;top:96.35px;">Attr.<br>price<br>excl<br>tax</div>
<div class="inp" style="left:800px;top:165px;width:27px;height:21px"></div>
<div class="inp" style="left:836px;top:165px;width:27px;height:21px"></div>
<div class="inp" style="left:1052px;top:165px;width:59px;height:21px"></div>
<div class="inp" style="left:1124px;top:165px;width:67px;height:21px"></div>
<div class="inp" style="left:1295px;top:165px;width:43px;height:21px"></div>
<div class="inp" style="left:1421px;top:165px;width:43px;height:21px"></div>
<div class="inp" style="left:1475px;top:165px;width:39px;height:21px"></div>
<div class="inp" style="left:1524px;top:165px;width:36px;height:21px"></div>
<div class="inp" style="left:1569px;top:165px;width:36px;height:21px"></div>
<div class="inp" style="left:1614px;top:165px;width:36px;height:21px"></div>
<div class="inp" style="left:1659px;top:165px;width:36px;height:21px"></div>
<div class="inp" style="left:1704px;top:165px;width:36px;height:21px"></div>
<div class="inp" style="left:872px;top:165px;width:157px;height:21px;border:2px solid #111;border-radius:3px;"></div>
<div class="t " style="left:876px;top:170.00px;font-size:12.6px;color:#333;letter-spacing:-0.181px;">white</div>
<div class="sel" style="left:1205px;top:165px;width:76px;height:20px"></div>
<svg class="i" style="left:1264px;top:171.5px" width="10" height="7" viewBox="0 0 10 7"><path d="M1 1.200l4 4 4-4" fill="none" stroke="#222" stroke-width="1.800"/></svg>
<div class="sel" style="left:1349px;top:165px;width:59px;height:20px"></div>
<svg class="i" style="left:1391px;top:171.5px" width="10" height="7" viewBox="0 0 10 7"><path d="M1 1.200l4 4 4-4" fill="none" stroke="#222" stroke-width="1.800"/></svg>
<div class="r" style="left:795px;top:195px;width:35px;height:1px;background:#e0e0e0;"></div>
<div class="r" style="left:831px;top:195px;width:35px;height:1px;background:#e0e0e0;"></div>
<div class="r" style="left:867px;top:195px;width:178.5px;height:1px;background:#e0e0e0;"></div>
<div class="r" style="left:1046.5px;top:195px;width:71px;height:1px;background:#e0e0e0;"></div>
<div class="r" style="left:1118.5px;top:195px;width:80px;height:1px;background:#e0e0e0;"></div>
<div class="r" style="left:1199.5px;top:195px;width:89px;height:1px;background:#e0e0e0;"></div>
<div class="r" style="left:1289.5px;top:195px;width:53.5px;height:1px;background:#e0e0e0;"></div>
<div class="r" style="left:1344px;top:195px;width:71px;height:1px;background:#e0e0e0;"></div>
<div class="r" style="left:1416px;top:195px;width:53px;height:1px;background:#e0e0e0;"></div>
<div class="r" style="left:1470px;top:195px;width:48px;height:1px;background:#e0e0e0;"></div>
<div class="r" style="left:1519px;top:195px;width:44px;height:1px;background:#e0e0e0;"></div>
<div class="r" style="left:1564px;top:195px;width:44px;height:1px;background:#e0e0e0;"></div>
<div class="r" style="left:1609px;top:195px;width:44px;height:1px;background:#e0e0e0;"></div>
<div class="r" style="left:1654px;top:195px;width:44px;height:1px;background:#e0e0e0;"></div>
<div class="r" style="left:1699px;top:195px;width:44px;height:1px;background:#e0e0e0;"></div>
<div class="r" style="left:1744px;top:195px;width:45px;height:1px;background:#e0e0e0;"></div>
<div class="r" style="left:795px;top:224px;width:35px;height:1px;background:#e0e0e0;"></div>
<div class="r" style="left:831px;top:224px;width:35px;height:1px;background:#e0e0e0;"></div>
<div class="r" style="left:867px;top:224px;width:178.5px;height:1px;background:#e0e0e0;"></div>
<div class="r" style="left:1046.5px;top:224px;width:71px;height:1px;background:#e0e0e0;"></div>
<div class="r" style="left:1118.5px;top:224px;width:80px;height:1px;background:#e0e0e0;"></div>
<div class="r" style="left:1199.5px;top:224px;width:89px;height:1px;background:#e0e0e0;"></div>
<div class="r" style="left:1289.5px;top:224px;width:53.5px;height:1px;background:#e0e0e0;"></div>
<div class="r" style="left:1344px;top:224px;width:71px;height:1px;background:#e0e0e0;"></div>
<div class="r" style="left:1416px;top:224px;width:53px;height:1px;background:#e0e0e0;"></div>
<div class="r" style="left:1470px;top:224px;width:48px;height:1px;background:#e0e0e0;"></div>
<div class="r" style="left:1519px;top:224px;width:44px;height:1px;background:#e0e0e0;"></div>
<div class="r" style="left:1564px;top:224px;width:44px;height:1px;background:#e0e0e0;"></div>
<div class="r" style="left:1609px;top:224px;width:44px;height:1px;background:#e0e0e0;"></div>
<div class="r" style="left:1654px;top:224px;width:44px;height:1px;background:#e0e0e0;"></div>
<div class="r" style="left:1699px;top:224px;width:44px;height:1px;background:#e0e0e0;"></div>
<div class="r" style="left:1744px;top:224px;width:45px;height:1px;background:#e0e0e0;"></div>
<div class="r" style="left:795px;top:254px;width:35px;height:1px;background:#e0e0e0;"></div>
<div class="r" style="left:831px;top:254px;width:35px;height:1px;background:#e0e0e0;"></div>
<div class="r" style="left:867px;top:254px;width:178.5px;height:1px;background:#e0e0e0;"></div>
<div class="r" style="left:1046.5px;top:254px;width:71px;height:1px;background:#e0e0e0;"></div>
<div class="r" style="left:1118.5px;top:254px;width:80px;height:1px;background:#e0e0e0;"></div>
<div class="r" style="left:1199.5px;top:254px;width:89px;height:1px;background:#e0e0e0;"></div>
<div class="r" style="left:1289.5px;top:254px;width:53.5px;height:1px;background:#e0e0e0;"></div>
<div class="r" style="left:1344px;top:254px;width:71px;height:1px;background:#e0e0e0;"></div>
<div class="r" style="left:1416px;top:254px;width:53px;height:1px;background:#e0e0e0;"></div>
<div class="r" style="left:1470px;top:254px;width:48px;height:1px;background:#e0e0e0;"></div>
<div class="r" style="left:1519px;top:254px;width:44px;height:1px;background:#e0e0e0;"></div>
<div class="r" style="left:1564px;top:254px;width:44px;height:1px;background:#e0e0e0;"></div>
<div class="r" style="left:1609px;top:254px;width:44px;height:1px;background:#e0e0e0;"></div>
<div class="r" style="left:1654px;top:254px;width:44px;height:1px;background:#e0e0e0;"></div>
<div class="r" style="left:1699px;top:254px;width:44px;height:1px;background:#e0e0e0;"></div>
<div class="r" style="left:1744px;top:254px;width:45px;height:1px;background:#e0e0e0;"></div>
<div class="r" style="left:795px;top:284px;width:35px;height:1px;background:#e0e0e0;"></div>
<div class="r" style="left:831px;top:284px;width:35px;height:1px;background:#e0e0e0;"></div>
<div class="r" style="left:867px;top:284px;width:178.5px;height:1px;background:#e0e0e0;"></div>
<div class="r" style="left:1046.5px;top:284px;width:71px;height:1px;background:#e0e0e0;"></div>
<div class="r" style="left:1118.5px;top:284px;width:80px;height:1px;background:#e0e0e0;"></div>
<div class="r" style="left:1199.5px;top:284px;width:89px;height:1px;background:#e0e0e0;"></div>
<div class="r" style="left:1289.5px;top:284px;width:53.5px;height:1px;background:#e0e0e0;"></div>
<div class="r" style="left:1344px;top:284px;width:71px;height:1px;background:#e0e0e0;"></div>
<div class="r" style="left:1416px;top:284px;width:53px;height:1px;background:#e0e0e0;"></div>
<div class="r" style="left:1470px;top:284px;width:48px;height:1px;background:#e0e0e0;"></div>
<div class="r" style="left:1519px;top:284px;width:44px;height:1px;background:#e0e0e0;"></div>
<div class="r" style="left:1564px;top:284px;width:44px;height:1px;background:#e0e0e0;"></div>
<div class="r" style="left:1609px;top:284px;width:44px;height:1px;background:#e0e0e0;"></div>
<div class="r" style="left:1654px;top:284px;width:44px;height:1px;background:#e0e0e0;"></div>
<div class="r" style="left:1699px;top:284px;width:44px;height:1px;background:#e0e0e0;"></div>
<div class="r" style="left:1744px;top:284px;width:45px;height:1px;background:#e0e0e0;"></div>
<div class="r" style="left:795px;top:314px;width:35px;height:1px;background:#e0e0e0;"></div>
<div class="r" style="left:831px;top:314px;width:35px;height:1px;background:#e0e0e0;"></div>
<div class="r" style="left:867px;top:314px;width:178.5px;height:1px;background:#e0e0e0;"></div>
<div class="r" style="left:1046.5px;top:314px;width:71px;height:1px;background:#e0e0e0;"></div>
<div class="r" style="left:1118.5px;top:314px;width:80px;height:1px;background:#e0e0e0;"></div>
<div class="r" style="left:1199.5px;top:314px;width:89px;height:1px;background:#e0e0e0;"></div>
<div class="r" style="left:1289.5px;top:314px;width:53.5px;height:1px;background:#e0e0e0;"></div>
<div class="r" style="left:1344px;top:314px;width:71px;height:1px;background:#e0e0e0;"></div>
<div class="r" style="left:1416px;top:314px;width:53px;height:1px;background:#e0e0e0;"></div>
<div class="r" style="left:1470px;top:314px;width:48px;height:1px;background:#e0e0e0;"></div>
<div class="r" style="left:1519px;top:314px;width:44px;height:1px;background:#e0e0e0;"></div>
<div class="r" style="left:1564px;top:314px;width:44px;height:1px;background:#e0e0e0;"></div>
<div class="r" style="left:1609px;top:314px;width:44px;height:1px;background:#e0e0e0;"></div>
<div class="r" style="left:1654px;top:314px;width:44px;height:1px;background:#e0e0e0;"></div>
<div class="r" style="left:1699px;top:314px;width:44px;height:1px;background:#e0e0e0;"></div>
<div class="r" style="left:1744px;top:314px;width:45px;height:1px;background:#e0e0e0;"></div>
<div class="r" style="left:795px;top:343px;width:35px;height:1px;background:#e0e0e0;"></div>
<div class="r" style="left:831px;top:343px;width:35px;height:1px;background:#e0e0e0;"></div>
<div class="r" style="left:867px;top:343px;width:178.5px;height:1px;background:#e0e0e0;"></div>
<div class="r" style="left:1046.5px;top:343px;width:71px;height:1px;background:#e0e0e0;"></div>
<div class="r" style="left:1118.5px;top:343px;width:80px;height:1px;background:#e0e0e0;"></div>
<div class="r" style="left:1199.5px;top:343px;width:89px;height:1px;background:#e0e0e0;"></div>
<div class="r" style="left:1289.5px;top:343px;width:53.5px;height:1px;background:#e0e0e0;"></div>
<div class="r" style="left:1344px;top:343px;width:71px;height:1px;background:#e0e0e0;"></div>
<div class="r" style="left:1416px;top:343px;width:53px;height:1px;background:#e0e0e0;"></div>
<div class="r" style="left:1470px;top:343px;width:48px;height:1px;background:#e0e0e0;"></div>
<div class="r" style="left:1519px;top:343px;width:44px;height:1px;background:#e0e0e0;"></div>
<div class="r" style="left:1564px;top:343px;width:44px;height:1px;background:#e0e0e0;"></div>
<div class="r" style="left:1609px;top:343px;width:44px;height:1px;background:#e0e0e0;"></div>
<div class="r" style="left:1654px;top:343px;width:44px;height:1px;background:#e0e0e0;"></div>
<div class="r" style="left:1699px;top:343px;width:44px;height:1px;background:#e0e0e0;"></div>
<div class="r" style="left:1744px;top:343px;width:45px;height:1px;background:#e0e0e0;"></div>
<div class="r" style="left:795px;top:373px;width:35px;height:1px;background:#e0e0e0;"></div>
<div class="r" style="left:831px;top:373px;width:35px;height:1px;background:#e0e0e0;"></div>
<div class="r" style="left:867px;top:373px;width:178.5px;height:1px;background:#e0e0e0;"></div>
<div class="r" style="left:1046.5px;top:373px;width:71px;height:1px;background:#e0e0e0;"></div>
<div class="r" style="left:1118.5px;top:373px;width:80px;height:1px;background:#e0e0e0;"></div>
<div class="r" style="left:1199.5px;top:373px;width:89px;height:1px;background:#e0e0e0;"></div>
<div class="r" style="left:1289.5px;top:373px;width:53.5px;height:1px;background:#e0e0e0;"></div>
<div class="r" style="left:1344px;top:373px;width:71px;height:1px;background:#e0e0e0;"></div>
<div class="r" style="left:1416px;top:373px;width:53px;height:1px;background:#e0e0e0;"></div>
<div class="r" style="left:1470px;top:373px;width:48px;height:1px;background:#e0e0e0;"></div>
<div class="r" style="left:1519px;top:373px;width:44px;height:1px;background:#e0e0e0;"></div>
<div class="r" style="left:1564px;top:373px;width:44px;height:1px;background:#e0e0e0;"></div>
<div class="r" style="left:1609px;top:373px;width:44px;height:1px;background:#e0e0e0;"></div>
<div class="r" style="left:1654px;top:373px;width:44px;height:1px;background:#e0e0e0;"></div>
<div class="r" style="left:1699px;top:373px;width:44px;height:1px;background:#e0e0e0;"></div>
<div class="r" style="left:1744px;top:373px;width:45px;height:1px;background:#e0e0e0;"></div>
<div class="r" style="left:795px;top:403px;width:35px;height:1px;background:#e0e0e0;"></div>
<div class="r" style="left:831px;top:403px;width:35px;height:1px;background:#e0e0e0;"></div>
<div class="r" style="left:867px;top:403px;width:178.5px;height:1px;background:#e0e0e0;"></div>
<div class="r" style="left:1046.5px;top:403px;width:71px;height:1px;background:#e0e0e0;"></div>
<div class="r" style="left:1118.5px;top:403px;width:80px;height:1px;background:#e0e0e0;"></div>
<div class="r" style="left:1199.5px;top:403px;width:89px;height:1px;background:#e0e0e0;"></div>
<div class="r" style="left:1289.5px;top:403px;width:53.5px;height:1px;background:#e0e0e0;"></div>
<div class="r" style="left:1344px;top:403px;width:71px;height:1px;background:#e0e0e0;"></div>
<div class="r" style="left:1416px;top:403px;width:53px;height:1px;background:#e0e0e0;"></div>
<div class="r" style="left:1470px;top:403px;width:48px;height:1px;background:#e0e0e0;"></div>
<div class="r" style="left:1519px;top:403px;width:44px;height:1px;background:#e0e0e0;"></div>
<div class="r" style="left:1564px;top:403px;width:44px;height:1px;background:#e0e0e0;"></div>
<div class="r" style="left:1609px;top:403px;width:44px;height:1px;background:#e0e0e0;"></div>
<div class="r" style="left:1654px;top:403px;width:44px;height:1px;background:#e0e0e0;"></div>
<div class="r" style="left:1699px;top:403px;width:44px;height:1px;background:#e0e0e0;"></div>
<div class="r" style="left:1744px;top:403px;width:45px;height:1px;background:#e0e0e0;"></div>
<div class="r" style="left:795px;top:433px;width:35px;height:1px;background:#e0e0e0;"></div>
<div class="r" style="left:831px;top:433px;width:35px;height:1px;background:#e0e0e0;"></div>
<div class="r" style="left:867px;top:433px;width:178.5px;height:1px;background:#e0e0e0;"></div>
<div class="r" style="left:1046.5px;top:433px;width:71px;height:1px;background:#e0e0e0;"></div>
<div class="r" style="left:1118.5px;top:433px;width:80px;height:1px;background:#e0e0e0;"></div>
<div class="r" style="left:1199.5px;top:433px;width:89px;height:1px;background:#e0e0e0;"></div>
<div class="r" style="left:1289.5px;top:433px;width:53.5px;height:1px;background:#e0e0e0;"></div>
<div class="r" style="left:1344px;top:433px;width:71px;height:1px;background:#e0e0e0;"></div>
<div class="r" style="left:1416px;top:433px;width:53px;height:1px;background:#e0e0e0;"></div>
<div class="r" style="left:1470px;top:433px;width:48px;height:1px;background:#e0e0e0;"></div>
<div class="r" style="left:1519px;top:433px;width:44px;height:1px;background:#e0e0e0;"></div>
<div class="r" style="left:1564px;top:433px;width:44px;height:1px;background:#e0e0e0;"></div>
<div class="r" style="left:1609px;top:433px;width:44px;height:1px;background:#e0e0e0;"></div>
<div class="r" style="left:1654px;top:433px;width:44px;height:1px;background:#e0e0e0;"></div>
<div class="r" style="left:1699px;top:433px;width:44px;height:1px;background:#e0e0e0;"></div>
<div class="r" style="left:1744px;top:433px;width:45px;height:1px;background:#e0e0e0;"></div>
<div class="r" style="left:795px;top:462px;width:35px;height:1px;background:#e0e0e0;"></div>
<div class="r" style="left:831px;top:462px;width:35px;height:1px;background:#e0e0e0;"></div>
<div class="r" style="left:867px;top:462px;width:178.5px;height:1px;background:#e0e0e0;"></div>
<div class="r" style="left:1046.5px;top:462px;width:71px;height:1px;background:#e0e0e0;"></div>
<div class="r" style="left:1118.5px;top:462px;width:80px;height:1px;background:#e0e0e0;"></div>
<div class="r" style="left:1199.5px;top:462px;width:89px;height:1px;background:#e0e0e0;"></div>
<div class="r" style="left:1289.5px;top:462px;width:53.5px;height:1px;background:#e0e0e0;"></div>
<div class="r" style="left:1344px;top:462px;width:71px;height:1px;background:#e0e0e0;"></div>
<div class="r" style="left:1416px;top:462px;width:53px;height:1px;background:#e0e0e0;"></div>
<div class="r" style="left:1470px;top:462px;width:48px;height:1px;background:#e0e0e0;"></div>
<div class="r" style="left:1519px;top:462px;width:44px;height:1px;background:#e0e0e0;"></div>
<div class="r" style="left:1564px;top:462px;width:44px;height:1px;background:#e0e0e0;"></div>
<div class="r" style="left:1609px;top:462px;width:44px;height:1px;background:#e0e0e0;"></div>
<div class="r" style="left:1654px;top:462px;width:44px;height:1px;background:#e0e0e0;"></div>
<div class="r" style="left:1699px;top:462px;width:44px;height:1px;background:#e0e0e0;"></div>
<div class="r" style="left:1744px;top:462px;width:45px;height:1px;background:#e0e0e0;"></div>
<div class="t " style="left:804px;top:204.00px;font-size:12.6px;color:#222;width:27px;overflow:hidden;padding-bottom:4px;">565</div>
<div class="t " style="left:831px;top:204.00px;font-size:12.6px;color:#8a8a8a;width:31px;overflow:hidden;padding-bottom:4px;text-align:right;">259</div>
<div class="t " style="left:871.5px;top:204.00px;font-size:12.6px;color:#222;width:172px;overflow:hidden;padding-bottom:4px;letter-spacing:-0.061px;">Color : White</div>
<div class="t " style="left:1050.5px;top:204.00px;font-size:12.6px;color:#222;letter-spacing:-0.044px;">565-3</div>
<div class="t " style="left:1203.5px;top:204.00px;font-size:12.6px;color:#222;letter-spacing:0.017px;">Shop 1 (#1)</div>
<div class="t " style="left:1289px;top:204.00px;font-size:12.6px;color:#222;width:50.5px;overflow:hidden;padding-bottom:4px;text-align:right;">3</div>
<div class="t " style="left:1348px;top:204.00px;font-size:12.6px;color:#222;letter-spacing:-0.092px;">0000-00-00</div>
<div class="t " style="left:1415px;top:204.00px;font-size:12.6px;color:#222;width:49.5px;overflow:hidden;padding-bottom:4px;text-align:right;">1</div>
<div class="t " style="left:1469.5px;top:204.00px;font-size:12.6px;color:#222;width:45.2px;overflow:hidden;padding-bottom:4px;text-align:right;">0.0000</div>
<div class="t " style="left:1518.5px;top:204.00px;font-size:12.6px;color:#222;width:43.5px;overflow:hidden;padding-bottom:4px;text-align:right;">946.99</div>
<div class="t " style="left:1567.5px;top:204.00px;font-size:12.6px;color:#222;width:40.5px;overflow:hidden;padding-bottom:4px;letter-spacing:-0.08px;">1232.94</div>
<div class="t " style="left:1609px;top:204.00px;font-size:12.6px;color:#222;width:41.1px;overflow:hidden;padding-bottom:4px;text-align:right;">20.00</div>
<div class="t " style="left:1654px;top:204.00px;font-size:12.6px;color:#222;width:42.5px;overflow:hidden;padding-bottom:4px;text-align:right;">789.16</div>
<div class="t " style="left:1702.5px;top:204.00px;font-size:12.6px;color:#222;width:40.5px;overflow:hidden;padding-bottom:4px;letter-spacing:-0.08px;">1027.45</div>
<div class="t " style="left:804px;top:233.00px;font-size:12.6px;color:#222;width:27px;overflow:hidden;padding-bottom:4px;">565</div>
<div class="t " style="left:831px;top:233.00px;font-size:12.6px;color:#8a8a8a;width:31px;overflow:hidden;padding-bottom:4px;text-align:right;">259</div>
<div class="t " style="left:871.5px;top:233.00px;font-size:12.6px;color:#222;width:172px;overflow:hidden;padding-bottom:4px;letter-spacing:-0.061px;">Color : White</div>
<div class="t " style="left:1050.5px;top:233.00px;font-size:12.6px;color:#222;letter-spacing:-0.044px;">565-3</div>
<div class="t " style="left:1203.5px;top:233.00px;font-size:12.6px;color:#222;letter-spacing:0.017px;">Shop 2 (#2)</div>
<div class="t " style="left:1289px;top:233.00px;font-size:12.6px;color:#222;width:50.5px;overflow:hidden;padding-bottom:4px;text-align:right;">0</div>
<div class="t " style="left:1348px;top:233.00px;font-size:12.6px;color:#222;letter-spacing:-0.092px;">0000-00-00</div>
<div class="t " style="left:1415px;top:233.00px;font-size:12.6px;color:#222;width:49.5px;overflow:hidden;padding-bottom:4px;text-align:right;">1</div>
<div class="t " style="left:1469.5px;top:233.00px;font-size:12.6px;color:#222;width:45.2px;overflow:hidden;padding-bottom:4px;text-align:right;">0.0000</div>
<div class="t " style="left:1518.5px;top:233.00px;font-size:12.6px;color:#222;width:43.5px;overflow:hidden;padding-bottom:4px;text-align:right;">946.99</div>
<div class="t " style="left:1567.5px;top:233.00px;font-size:12.6px;color:#222;width:40.5px;overflow:hidden;padding-bottom:4px;letter-spacing:-0.08px;">1232.94</div>
<div class="t " style="left:1609px;top:233.00px;font-size:12.6px;color:#222;width:41.1px;overflow:hidden;padding-bottom:4px;text-align:right;">20.00</div>
<div class="t " style="left:1654px;top:233.00px;font-size:12.6px;color:#222;width:42.5px;overflow:hidden;padding-bottom:4px;text-align:right;">789.16</div>
<div class="t " style="left:1702.5px;top:233.00px;font-size:12.6px;color:#222;width:40.5px;overflow:hidden;padding-bottom:4px;letter-spacing:-0.08px;">1027.45</div>
<div class="t " style="left:804px;top:263.00px;font-size:12.6px;color:#222;width:27px;overflow:hidden;padding-bottom:4px;">565</div>
<div class="t " style="left:831px;top:263.00px;font-size:12.6px;color:#8a8a8a;width:31px;overflow:hidden;padding-bottom:4px;text-align:right;">259</div>
<div class="t " style="left:871.5px;top:263.00px;font-size:12.6px;color:#222;width:172px;overflow:hidden;padding-bottom:4px;letter-spacing:-0.061px;">Color : White</div>
<div class="t " style="left:1050.5px;top:263.00px;font-size:12.6px;color:#222;letter-spacing:-0.044px;">565-3</div>
<div class="t " style="left:1203.5px;top:263.00px;font-size:12.6px;color:#222;letter-spacing:0.017px;">Shop 3 (#3)</div>
<div class="t " style="left:1289px;top:263.00px;font-size:12.6px;color:#222;width:50.5px;overflow:hidden;padding-bottom:4px;text-align:right;">3</div>
<div class="t " style="left:1348px;top:263.00px;font-size:12.6px;color:#222;letter-spacing:-0.092px;">0000-00-00</div>
<div class="t " style="left:1415px;top:263.00px;font-size:12.6px;color:#222;width:49.5px;overflow:hidden;padding-bottom:4px;text-align:right;">1</div>
<div class="t " style="left:1469.5px;top:263.00px;font-size:12.6px;color:#222;width:45.2px;overflow:hidden;padding-bottom:4px;text-align:right;">0.0000</div>
<div class="t " style="left:1518.5px;top:263.00px;font-size:12.6px;color:#222;width:43.5px;overflow:hidden;padding-bottom:4px;text-align:right;">946.99</div>
<div class="t " style="left:1567.5px;top:263.00px;font-size:12.6px;color:#222;width:40.5px;overflow:hidden;padding-bottom:4px;letter-spacing:-0.08px;">1232.94</div>
<div class="t " style="left:1609px;top:263.00px;font-size:12.6px;color:#222;width:41.1px;overflow:hidden;padding-bottom:4px;text-align:right;">20.00</div>
<div class="t " style="left:1654px;top:263.00px;font-size:12.6px;color:#222;width:42.5px;overflow:hidden;padding-bottom:4px;text-align:right;">789.16</div>
<div class="t " style="left:1702.5px;top:263.00px;font-size:12.6px;color:#222;width:40.5px;overflow:hidden;padding-bottom:4px;letter-spacing:-0.08px;">1027.45</div>
<div class="t " style="left:804px;top:293.00px;font-size:12.6px;color:#222;width:27px;overflow:hidden;padding-bottom:4px;">783</div>
<div class="t " style="left:831px;top:293.00px;font-size:12.6px;color:#8a8a8a;width:31px;overflow:hidden;padding-bottom:4px;text-align:right;">407</div>
<div class="t " style="left:871.5px;top:293.00px;font-size:12.6px;color:#222;width:172px;overflow:hidden;padding-bottom:4px;letter-spacing:-0.061px;">Color : White</div>
<div class="t " style="left:1050.5px;top:293.00px;font-size:12.6px;color:#222;letter-spacing:0.037px;">783-1-Blan</div>
<div class="t " style="left:1203.5px;top:293.00px;font-size:12.6px;color:#222;letter-spacing:0.017px;">Shop 1 (#1)</div>
<div class="t " style="left:1289px;top:293.00px;font-size:12.6px;color:#222;width:50.5px;overflow:hidden;padding-bottom:4px;text-align:right;">3</div>
<div class="t " style="left:1348px;top:293.00px;font-size:12.6px;color:#222;letter-spacing:-0.092px;">0000-00-00</div>
<div class="t " style="left:1415px;top:293.00px;font-size:12.6px;color:#222;width:49.5px;overflow:hidden;padding-bottom:4px;text-align:right;">1</div>
<div class="t " style="left:1469.5px;top:293.00px;font-size:12.6px;color:#222;width:45.2px;overflow:hidden;padding-bottom:4px;text-align:right;">0.0000</div>
<div class="t " style="left:1518.5px;top:293.00px;font-size:12.6px;color:#222;width:43.5px;overflow:hidden;padding-bottom:4px;text-align:right;">209.55</div>
<div class="t " style="left:1564px;top:293.00px;font-size:12.6px;color:#222;width:43.5px;overflow:hidden;padding-bottom:4px;text-align:right;">209.55</div>
<div class="t " style="left:1609px;top:293.00px;font-size:12.6px;color:#222;width:41.1px;overflow:hidden;padding-bottom:4px;text-align:right;">20.00</div>
<div class="t " style="left:1654px;top:293.00px;font-size:12.6px;color:#222;width:42.5px;overflow:hidden;padding-bottom:4px;text-align:right;">174.63</div>
<div class="t " style="left:1699px;top:293.00px;font-size:12.6px;color:#222;width:42.8px;overflow:hidden;padding-bottom:4px;text-align:right;">174.63</div>
<div class="t " style="left:804px;top:323.00px;font-size:12.6px;color:#222;width:27px;overflow:hidden;padding-bottom:4px;">783</div>
<div class="t " style="left:831px;top:323.00px;font-size:12.6px;color:#8a8a8a;width:31px;overflow:hidden;padding-bottom:4px;text-align:right;">407</div>
<div class="t " style="left:871.5px;top:323.00px;font-size:12.6px;color:#222;width:172px;overflow:hidden;padding-bottom:4px;letter-spacing:-0.061px;">Color : White</div>
<div class="t " style="left:1050.5px;top:323.00px;font-size:12.6px;color:#222;letter-spacing:0.037px;">783-1-Blan</div>
<div class="t " style="left:1203.5px;top:323.00px;font-size:12.6px;color:#222;letter-spacing:0.017px;">Shop 2 (#2)</div>
<div class="t " style="left:1289px;top:323.00px;font-size:12.6px;color:#222;width:50.5px;overflow:hidden;padding-bottom:4px;text-align:right;">0</div>
<div class="t " style="left:1348px;top:323.00px;font-size:12.6px;color:#222;letter-spacing:-0.092px;">0000-00-00</div>
<div class="t " style="left:1415px;top:323.00px;font-size:12.6px;color:#222;width:49.5px;overflow:hidden;padding-bottom:4px;text-align:right;">1</div>
<div class="t " style="left:1469.5px;top:323.00px;font-size:12.6px;color:#222;width:45.2px;overflow:hidden;padding-bottom:4px;text-align:right;">0.0000</div>
<div class="t " style="left:1518.5px;top:323.00px;font-size:12.6px;color:#222;width:43.5px;overflow:hidden;padding-bottom:4px;text-align:right;">195.66</div>
<div class="t " style="left:1564px;top:323.00px;font-size:12.6px;color:#222;width:43.5px;overflow:hidden;padding-bottom:4px;text-align:right;">195.66</div>
<div class="t " style="left:1609px;top:323.00px;font-size:12.6px;color:#222;width:41.1px;overflow:hidden;padding-bottom:4px;text-align:right;">20.00</div>
<div class="t " style="left:1654px;top:323.00px;font-size:12.6px;color:#222;width:42.5px;overflow:hidden;padding-bottom:4px;text-align:right;">163.05</div>
<div class="t " style="left:1699px;top:323.00px;font-size:12.6px;color:#222;width:42.8px;overflow:hidden;padding-bottom:4px;text-align:right;">163.05</div>
<div class="t " style="left:804px;top:353.00px;font-size:12.6px;color:#222;width:27px;overflow:hidden;padding-bottom:4px;">783</div>
<div class="t " style="left:831px;top:353.00px;font-size:12.6px;color:#8a8a8a;width:31px;overflow:hidden;padding-bottom:4px;text-align:right;">407</div>
<div class="t " style="left:871.5px;top:353.00px;font-size:12.6px;color:#222;width:172px;overflow:hidden;padding-bottom:4px;letter-spacing:-0.061px;">Color : White</div>
<div class="t " style="left:1050.5px;top:353.00px;font-size:12.6px;color:#222;letter-spacing:0.037px;">783-1-Blan</div>
<div class="t " style="left:1203.5px;top:353.00px;font-size:12.6px;color:#222;letter-spacing:0.017px;">Shop 3 (#3)</div>
<div class="t " style="left:1289px;top:353.00px;font-size:12.6px;color:#222;width:50.5px;overflow:hidden;padding-bottom:4px;text-align:right;">3</div>
<div class="t " style="left:1348px;top:353.00px;font-size:12.6px;color:#222;letter-spacing:-0.092px;">0000-00-00</div>
<div class="t " style="left:1415px;top:353.00px;font-size:12.6px;color:#222;width:49.5px;overflow:hidden;padding-bottom:4px;text-align:right;">1</div>
<div class="t " style="left:1469.5px;top:353.00px;font-size:12.6px;color:#222;width:45.2px;overflow:hidden;padding-bottom:4px;text-align:right;">0.0000</div>
<div class="t " style="left:1518.5px;top:353.00px;font-size:12.6px;color:#222;width:43.5px;overflow:hidden;padding-bottom:4px;text-align:right;">209.55</div>
<div class="t " style="left:1564px;top:353.00px;font-size:12.6px;color:#222;width:43.5px;overflow:hidden;padding-bottom:4px;text-align:right;">209.55</div>
<div class="t " style="left:1609px;top:353.00px;font-size:12.6px;color:#222;width:41.1px;overflow:hidden;padding-bottom:4px;text-align:right;">20.00</div>
<div class="t " style="left:1654px;top:353.00px;font-size:12.6px;color:#222;width:42.5px;overflow:hidden;padding-bottom:4px;text-align:right;">174.63</div>
<div class="t " style="left:1699px;top:353.00px;font-size:12.6px;color:#222;width:42.8px;overflow:hidden;padding-bottom:4px;text-align:right;">174.63</div>
<div class="t " style="left:804px;top:382.00px;font-size:12.6px;color:#222;width:27px;overflow:hidden;padding-bottom:4px;">6977</div>
<div class="t " style="left:835.5px;top:382.00px;font-size:12.6px;color:#0000ee;width:30.5px;overflow:hidden;padding-bottom:4px;">10209</div>
<div class="t " style="left:871.5px;top:382.00px;font-size:12.6px;color:#222;width:172px;overflow:hidden;padding-bottom:4px;letter-spacing:-0.030px;">Color : White, Size : S</div>
<div class="t " style="left:1050.5px;top:382.00px;font-size:12.6px;color:#222;letter-spacing:0.062px;">TS-001-0</div>
<div class="t " style="left:1203.5px;top:382.00px;font-size:12.6px;color:#222;letter-spacing:0.017px;">Shop 1 (#1)</div>
<div class="t " style="left:1289px;top:382.00px;font-size:12.6px;color:#222;width:50.5px;overflow:hidden;padding-bottom:4px;text-align:right;">0</div>
<div class="t " style="left:1348px;top:382.00px;font-size:12.6px;color:#222;letter-spacing:-0.092px;">0000-00-00</div>
<div class="t " style="left:1415px;top:382.00px;font-size:12.6px;color:#222;width:49.5px;overflow:hidden;padding-bottom:4px;text-align:right;">1</div>
<div class="t " style="left:1469.5px;top:382.00px;font-size:12.6px;color:#222;width:45.2px;overflow:hidden;padding-bottom:4px;text-align:right;">0.0000</div>
<div class="t " style="left:1518.5px;top:382.00px;font-size:12.6px;color:#222;width:43.5px;overflow:hidden;padding-bottom:4px;text-align:right;">9.99</div>
<div class="t " style="left:1564px;top:382.00px;font-size:12.6px;color:#222;width:43.5px;overflow:hidden;padding-bottom:4px;text-align:right;">9.99</div>
<div class="t " style="left:1609px;top:382.00px;font-size:12.6px;color:#222;width:41.1px;overflow:hidden;padding-bottom:4px;text-align:right;">20.00</div>
<div class="t " style="left:1654px;top:382.00px;font-size:12.6px;color:#222;width:42.5px;overflow:hidden;padding-bottom:4px;text-align:right;">8.33</div>
<div class="t " style="left:1699px;top:382.00px;font-size:12.6px;color:#222;width:42.8px;overflow:hidden;padding-bottom:4px;text-align:right;">8.32</div>
<div class="t " style="left:804px;top:412.00px;font-size:12.6px;color:#222;width:27px;overflow:hidden;padding-bottom:4px;">6977</div>
<div class="t " style="left:835.5px;top:412.00px;font-size:12.6px;color:#0000ee;width:30.5px;overflow:hidden;padding-bottom:4px;">10209</div>
<div class="t " style="left:871.5px;top:412.00px;font-size:12.6px;color:#222;width:172px;overflow:hidden;padding-bottom:4px;letter-spacing:-0.030px;">Color : White, Size : S</div>
<div class="t " style="left:1050.5px;top:412.00px;font-size:12.6px;color:#222;letter-spacing:0.062px;">TS-001-0</div>
<div class="t " style="left:1203.5px;top:412.00px;font-size:12.6px;color:#222;letter-spacing:0.017px;">Shop 2 (#2)</div>
<div class="t " style="left:1289px;top:412.00px;font-size:12.6px;color:#222;width:50.5px;overflow:hidden;padding-bottom:4px;text-align:right;">0</div>
<div class="t " style="left:1348px;top:412.00px;font-size:12.6px;color:#222;letter-spacing:-0.092px;">0000-00-00</div>
<div class="t " style="left:1415px;top:412.00px;font-size:12.6px;color:#222;width:49.5px;overflow:hidden;padding-bottom:4px;text-align:right;">1</div>
<div class="t " style="left:1469.5px;top:412.00px;font-size:12.6px;color:#222;width:45.2px;overflow:hidden;padding-bottom:4px;text-align:right;">0.0000</div>
<div class="t " style="left:1518.5px;top:412.00px;font-size:12.6px;color:#222;width:43.5px;overflow:hidden;padding-bottom:4px;text-align:right;">9.99</div>
<div class="t " style="left:1564px;top:412.00px;font-size:12.6px;color:#222;width:43.5px;overflow:hidden;padding-bottom:4px;text-align:right;">9.99</div>
<div class="t " style="left:1609px;top:412.00px;font-size:12.6px;color:#222;width:41.1px;overflow:hidden;padding-bottom:4px;text-align:right;">20.00</div>
<div class="t " style="left:1654px;top:412.00px;font-size:12.6px;color:#222;width:42.5px;overflow:hidden;padding-bottom:4px;text-align:right;">8.33</div>
<div class="t " style="left:1699px;top:412.00px;font-size:12.6px;color:#222;width:42.8px;overflow:hidden;padding-bottom:4px;text-align:right;">8.32</div>
<div class="t " style="left:804px;top:442.00px;font-size:12.6px;color:#222;width:27px;overflow:hidden;padding-bottom:4px;">6977</div>
<div class="t " style="left:835.5px;top:442.00px;font-size:12.6px;color:#0000ee;width:30.5px;overflow:hidden;padding-bottom:4px;">10209</div>
<div class="t " style="left:871.5px;top:442.00px;font-size:12.6px;color:#222;width:172px;overflow:hidden;padding-bottom:4px;letter-spacing:-0.030px;">Color : White, Size : S</div>
<div class="t " style="left:1050.5px;top:442.00px;font-size:12.6px;color:#222;letter-spacing:0.062px;">TS-001-0</div>
<div class="t " style="left:1203.5px;top:442.00px;font-size:12.6px;color:#222;letter-spacing:0.017px;">Shop 3 (#3)</div>
<div class="t " style="left:1289px;top:442.00px;font-size:12.6px;color:#222;width:50.5px;overflow:hidden;padding-bottom:4px;text-align:right;">1</div>
<div class="t " style="left:1348px;top:442.00px;font-size:12.6px;color:#222;letter-spacing:-0.092px;">0000-00-00</div>
<div class="t " style="left:1415px;top:442.00px;font-size:12.6px;color:#222;width:49.5px;overflow:hidden;padding-bottom:4px;text-align:right;">1</div>
<div class="t " style="left:1469.5px;top:442.00px;font-size:12.6px;color:#222;width:45.2px;overflow:hidden;padding-bottom:4px;text-align:right;">0.0000</div>
<div class="t " style="left:1518.5px;top:442.00px;font-size:12.6px;color:#222;width:43.5px;overflow:hidden;padding-bottom:4px;text-align:right;">9.99</div>
<div class="t " style="left:1564px;top:442.00px;font-size:12.6px;color:#222;width:43.5px;overflow:hidden;padding-bottom:4px;text-align:right;">9.99</div>
<div class="t " style="left:1609px;top:442.00px;font-size:12.6px;color:#222;width:41.1px;overflow:hidden;padding-bottom:4px;text-align:right;">20.00</div>
<div class="t " style="left:1654px;top:442.00px;font-size:12.6px;color:#222;width:42.5px;overflow:hidden;padding-bottom:4px;text-align:right;">8.33</div>
<div class="t " style="left:1699px;top:442.00px;font-size:12.6px;color:#222;width:42.8px;overflow:hidden;padding-bottom:4px;text-align:right;">8.32</div>
</body></html>
